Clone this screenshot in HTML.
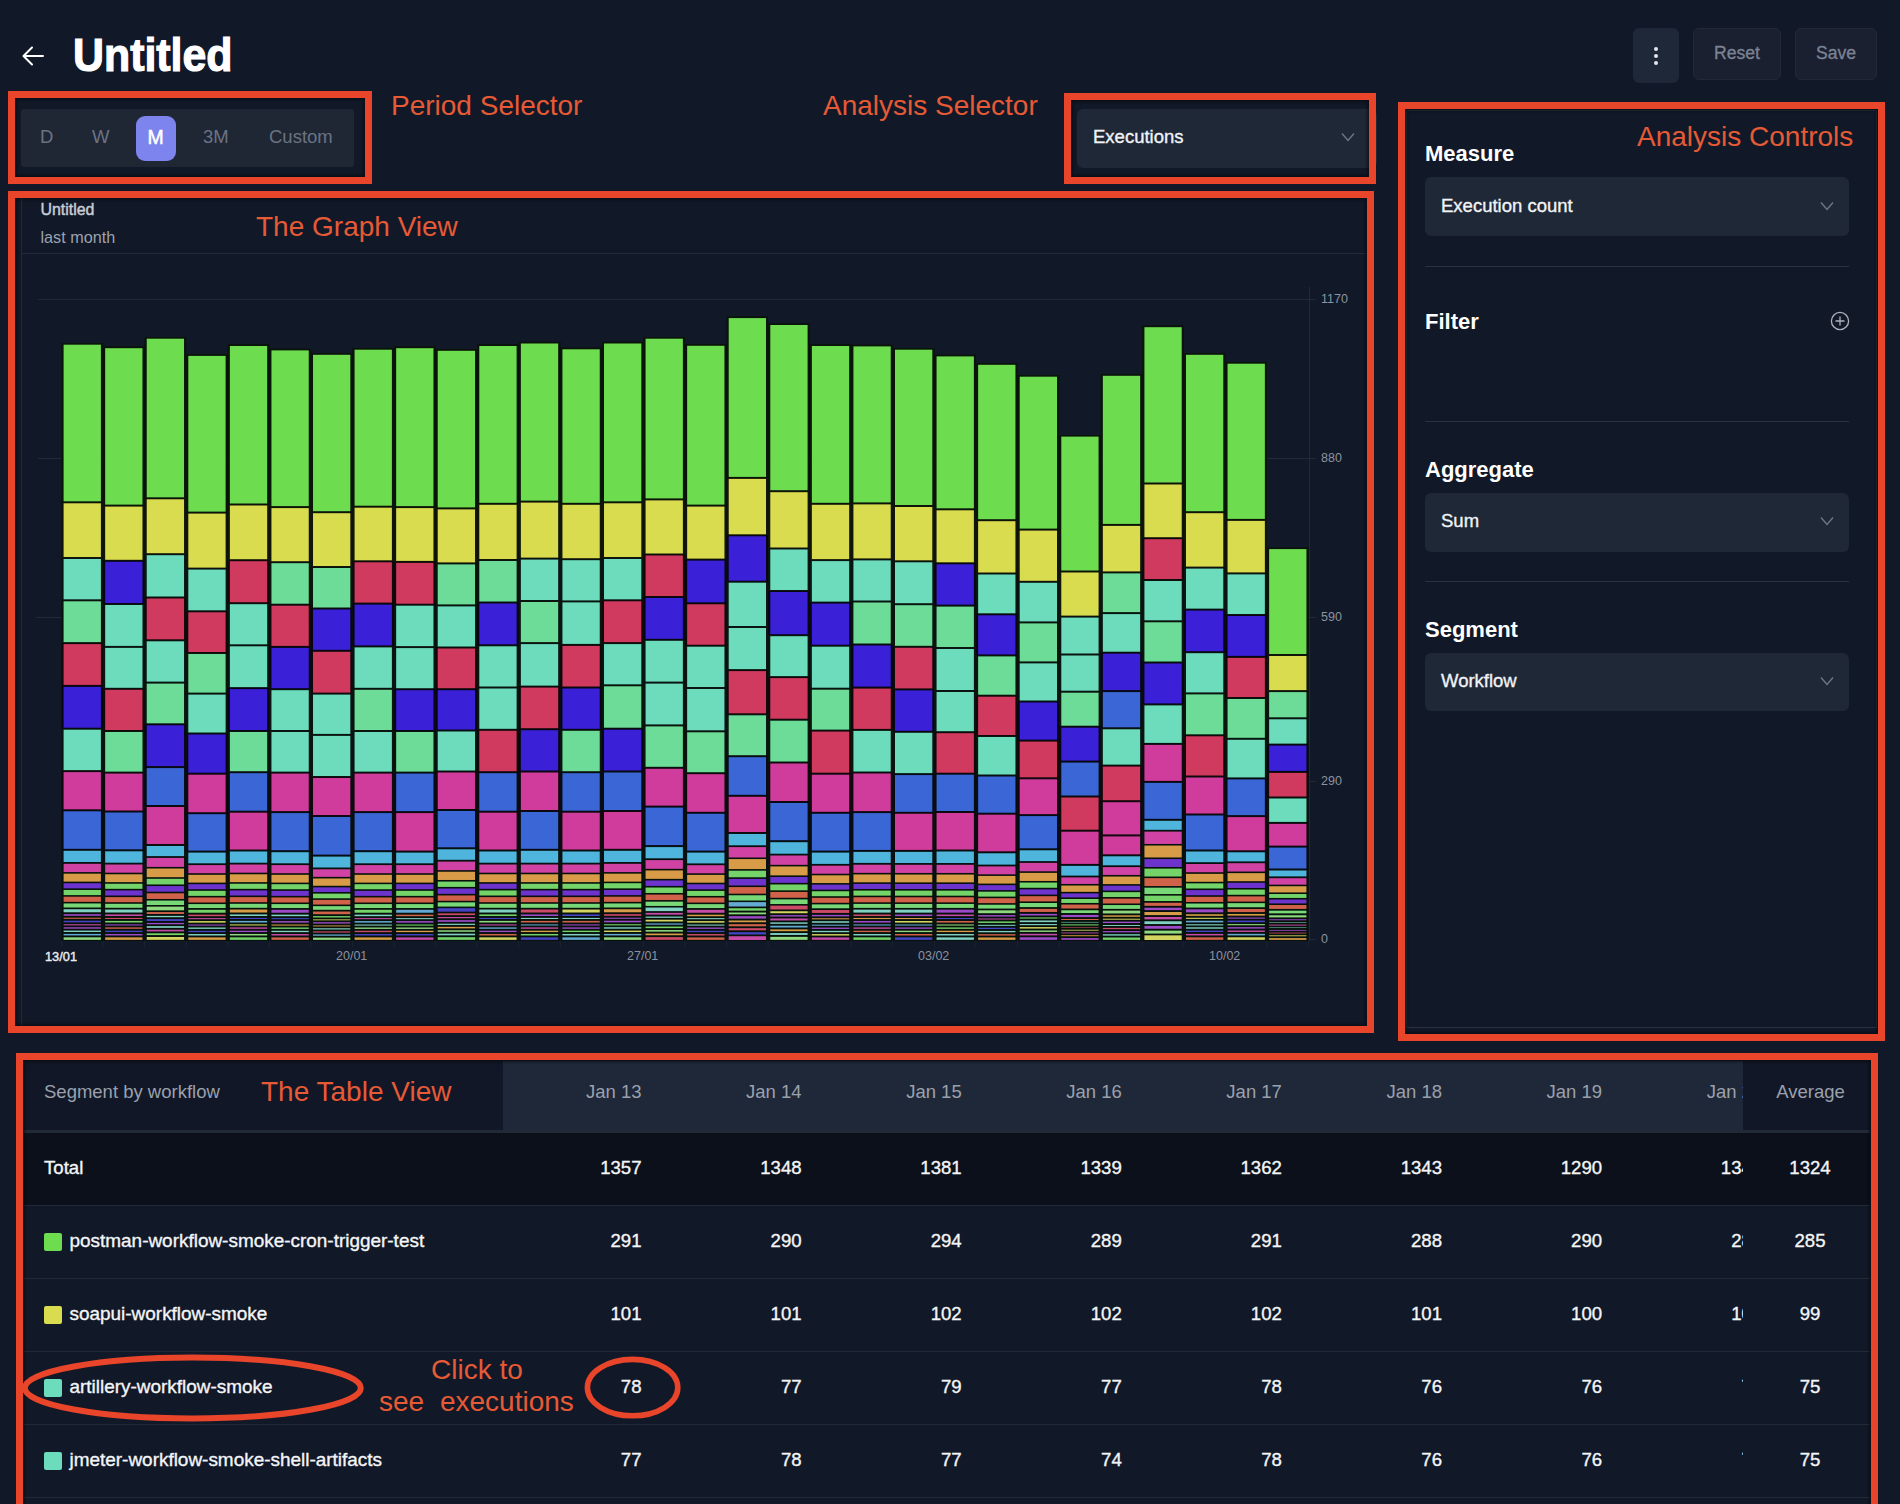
<!DOCTYPE html>
<html><head><meta charset="utf-8">
<style>
*{margin:0;padding:0;box-sizing:border-box}
html,body{width:1900px;height:1504px;overflow:hidden;background:#111827;font-family:"Liberation Sans",sans-serif;}
.a{position:absolute}
.box{position:absolute;border:7.5px solid #e8452a;box-shadow:inset 0 0 3px 2px rgba(5,7,12,0.55)}
.ann{position:absolute;color:#e65a36;font-size:28px;line-height:1;white-space:nowrap}
.dd{position:absolute;background:#1f2837;border-radius:6px}
.ddt{position:absolute;color:#f1f3f6;-webkit-text-stroke:0.35px #f1f3f6;font-size:18.5px;line-height:1;white-space:nowrap}
.chev{position:absolute;width:14px;height:10px}
.lbl{position:absolute;color:#fff;font-weight:bold;font-size:22px;line-height:1;white-space:nowrap}
.sep{position:absolute;height:1px;background:#2a3140}
.th{position:absolute;color:#9aa1ad;font-size:18.5px;line-height:1;white-space:nowrap;text-align:right}
.td{position:absolute;color:#f4f5f7;-webkit-text-stroke:0.35px #f4f5f7;font-size:18.6px;line-height:1;white-space:nowrap;text-align:right}
.sq{position:absolute;width:18px;height:18px;border-radius:2px}
</style></head><body>
<!-- header -->
<svg class="a" style="left:20px;top:44px" width="26" height="24" viewBox="0 0 26 24"><path d="M23 12H4M12 3.5L3.5 12L12 20.5" fill="none" stroke="#fff" stroke-width="2" stroke-linecap="round" stroke-linejoin="round"/></svg>
<div class="a" style="left:73px;top:30.5px;color:#fff;font-weight:bold;font-size:47px;line-height:1;white-space:nowrap;transform-origin:0 0;transform:scaleX(0.912);-webkit-text-stroke:1.2px #fff">Untitled</div>
<div class="a" style="left:1633px;top:28px;width:46px;height:55px;background:#1f2838;border-radius:6px"></div>
<div class="a" style="left:1653.6px;top:46.8px;width:4.4px;height:4.4px;border-radius:50%;background:#e3e6ec"></div>
<div class="a" style="left:1653.6px;top:53.6px;width:4.4px;height:4.4px;border-radius:50%;background:#e3e6ec"></div>
<div class="a" style="left:1653.6px;top:60.8px;width:4.4px;height:4.4px;border-radius:50%;background:#e3e6ec"></div>
<div class="a" style="left:1693px;top:28px;width:88px;height:52px;background:#1a2030;border:1px solid #212838;border-radius:6px"></div>
<div class="a" style="left:1714px;top:45px;color:#7b8394;-webkit-text-stroke:0.3px #7b8394;font-size:17.6px;line-height:1">Reset</div>
<div class="a" style="left:1795px;top:28px;width:82px;height:52px;background:#1a2030;border:1px solid #212838;border-radius:6px"></div>
<div class="a" style="left:1816px;top:45px;color:#7b8394;-webkit-text-stroke:0.3px #7b8394;font-size:17.6px;line-height:1">Save</div>

<!-- period selector -->
<div class="a" style="left:21px;top:109px;width:333px;height:58px;background:#1f2735;border-radius:3px"></div>
<div class="a" style="left:136px;top:116px;width:40px;height:45px;background:#7d84ee;border-radius:9px"></div>
<div class="a" style="left:40px;top:128px;color:#6b7383;font-size:18.5px;line-height:1">D</div>
<div class="a" style="left:92px;top:128px;color:#6b7383;font-size:18.5px;line-height:1">W</div>
<div class="a" style="left:147.5px;top:127.5px;color:#fff;-webkit-text-stroke:0.5px #fff;font-size:19.4px;line-height:1">M</div>
<div class="a" style="left:203px;top:128px;color:#6b7383;font-size:18.5px;line-height:1">3M</div>
<div class="a" style="left:269px;top:128px;color:#6b7383;font-size:18.5px;line-height:1">Custom</div>

<!-- analysis selector -->
<div class="dd" style="left:1077px;top:109px;width:300px;height:59px"></div>
<div class="ddt" style="left:1093px;top:128px">Executions</div>
<svg class="chev" style="left:1341px;top:132px" viewBox="0 0 14 10"><path d="M1 1.5L7 8.5L13 1.5" fill="none" stroke="#6e7687" stroke-width="1.4"/></svg>

<!-- graph card -->
<div class="a" style="left:21px;top:196px;width:1349px;height:832px;border:1px solid #222938;background:#111827"></div>
<div class="a" style="left:40.5px;top:201.5px;color:#c8cdd6;-webkit-text-stroke:0.45px #c8cdd6;font-size:15.9px;line-height:1">Untitled</div>
<div class="a" style="left:40.5px;top:229px;color:#9ca3af;font-size:16.2px;line-height:1">last month</div>
<div class="a" style="left:22px;top:253px;width:1350px;height:1px;background:#222938"></div>
<svg class="a" style="left:0;top:0" width="1900" height="1504">
<g stroke="#232a37" stroke-width="1">
<line x1="38" y1="299.5" x2="1316" y2="299.5"/>
<line x1="38" y1="458.5" x2="1316" y2="458.5"/>
<line x1="36" y1="617.5" x2="1316" y2="617.5"/>
<line x1="62" y1="781.5" x2="1316" y2="781.5"/>
<line x1="1309" y1="939.5" x2="1316" y2="939.5"/>
<line x1="1309.5" y1="287" x2="1309.5" y2="941"/>
</g>
<rect x="61.60" y="343.10" width="41.30" height="597.70" fill="#07110b"/>
<rect x="61.60" y="343.10" width="41.30" height="159.20" fill="#0a1509"/>
<rect x="61.60" y="502.30" width="41.30" height="55.70" fill="#121509"/>
<rect x="61.60" y="558.00" width="41.30" height="42.30" fill="#0a1511"/>
<rect x="61.60" y="600.30" width="41.30" height="42.80" fill="#0a150e"/>
<rect x="61.60" y="643.10" width="41.30" height="42.80" fill="#11080a"/>
<rect x="61.60" y="685.90" width="41.30" height="42.80" fill="#070612"/>
<rect x="61.60" y="728.70" width="41.30" height="42.40" fill="#0a1511"/>
<rect x="61.60" y="771.10" width="41.30" height="39.20" fill="#11080e"/>
<rect x="61.60" y="810.30" width="41.30" height="39.50" fill="#070c12"/>
<rect x="61.60" y="849.80" width="41.30" height="13.20" fill="#081213"/>
<rect x="63.60" y="344.70" width="37.30" height="156.60" fill="#6ddc4f"/>
<rect x="63.60" y="503.30" width="37.30" height="53.70" fill="#d9dc4f"/>
<rect x="63.60" y="559.00" width="37.30" height="40.30" fill="#6cdcbd"/>
<rect x="63.60" y="601.30" width="37.30" height="40.80" fill="#6ddc98"/>
<rect x="63.60" y="644.10" width="37.30" height="40.80" fill="#d03a5e"/>
<rect x="63.60" y="686.90" width="37.30" height="40.80" fill="#3a20d6"/>
<rect x="63.60" y="729.70" width="37.30" height="40.40" fill="#6cdcbd"/>
<rect x="63.60" y="772.10" width="37.30" height="37.20" fill="#d03c9c"/>
<rect x="63.60" y="811.30" width="37.30" height="37.50" fill="#3b66d6"/>
<rect x="63.60" y="850.80" width="37.30" height="11.20" fill="#4fb5dd"/>
<rect x="63.60" y="863.80" width="37.30" height="8.26" fill="#d043a4"/>
<rect x="63.60" y="873.66" width="37.30" height="7.96" fill="#d89c48"/>
<rect x="63.60" y="883.22" width="37.30" height="5.14" fill="#6c34cc"/>
<rect x="63.60" y="889.97" width="37.30" height="5.14" fill="#74d46a"/>
<rect x="63.60" y="896.71" width="37.30" height="5.14" fill="#d0624a"/>
<rect x="63.60" y="903.45" width="37.30" height="4.04" fill="#78d878"/>
<rect x="63.60" y="909.24" width="37.30" height="3.03" fill="#80d0c4"/>
<rect x="63.60" y="914.17" width="37.30" height="1.62" fill="#9c4ac8"/>
<rect x="63.60" y="917.70" width="37.30" height="1.12" fill="#d0624a"/>
<rect x="63.60" y="920.71" width="37.30" height="1.62" fill="#4444c4"/>
<rect x="63.60" y="924.24" width="37.30" height="1.12" fill="#c64aa8"/>
<rect x="63.60" y="927.26" width="37.30" height="1.42" fill="#9c4ac8"/>
<rect x="63.60" y="930.58" width="37.30" height="1.42" fill="#80d0c4"/>
<rect x="63.60" y="933.90" width="37.30" height="1.52" fill="#64a8d4"/>
<rect x="63.60" y="937.32" width="37.30" height="2.53" fill="#90d880"/>
<rect x="103.17" y="346.60" width="41.30" height="594.20" fill="#07110b"/>
<rect x="103.17" y="346.60" width="41.30" height="159.00" fill="#0a1509"/>
<rect x="103.17" y="505.60" width="41.30" height="55.20" fill="#121509"/>
<rect x="103.17" y="560.80" width="41.30" height="43.20" fill="#070612"/>
<rect x="103.17" y="604.00" width="41.30" height="42.90" fill="#0a1511"/>
<rect x="103.17" y="646.90" width="41.30" height="41.90" fill="#0a1511"/>
<rect x="103.17" y="688.80" width="41.30" height="42.20" fill="#11080a"/>
<rect x="103.17" y="731.00" width="41.30" height="41.60" fill="#0a150e"/>
<rect x="103.17" y="772.60" width="41.30" height="38.90" fill="#11080e"/>
<rect x="103.17" y="811.50" width="41.30" height="38.80" fill="#070c12"/>
<rect x="103.17" y="850.30" width="41.30" height="13.40" fill="#081213"/>
<rect x="105.17" y="348.20" width="37.30" height="156.40" fill="#6ddc4f"/>
<rect x="105.17" y="506.60" width="37.30" height="53.20" fill="#d9dc4f"/>
<rect x="105.17" y="561.80" width="37.30" height="41.20" fill="#3a20d6"/>
<rect x="105.17" y="605.00" width="37.30" height="40.90" fill="#6cdcbd"/>
<rect x="105.17" y="647.90" width="37.30" height="39.90" fill="#6cdcbd"/>
<rect x="105.17" y="689.80" width="37.30" height="40.20" fill="#d03a5e"/>
<rect x="105.17" y="732.00" width="37.30" height="39.60" fill="#6ddc98"/>
<rect x="105.17" y="773.60" width="37.30" height="36.90" fill="#d03c9c"/>
<rect x="105.17" y="812.50" width="37.30" height="36.80" fill="#3b66d6"/>
<rect x="105.17" y="851.30" width="37.30" height="11.40" fill="#4fb5dd"/>
<rect x="105.17" y="864.50" width="37.30" height="8.17" fill="#d043a4"/>
<rect x="105.17" y="874.27" width="37.30" height="7.88" fill="#d89c48"/>
<rect x="105.17" y="883.75" width="37.30" height="5.08" fill="#74d46a"/>
<rect x="105.17" y="890.43" width="37.30" height="5.08" fill="#6c34cc"/>
<rect x="105.17" y="897.12" width="37.30" height="5.08" fill="#d0624a"/>
<rect x="105.17" y="903.80" width="37.30" height="3.99" fill="#78d878"/>
<rect x="105.17" y="909.53" width="37.30" height="2.99" fill="#80d0c4"/>
<rect x="105.17" y="914.42" width="37.30" height="1.59" fill="#c64aa8"/>
<rect x="105.17" y="917.91" width="37.30" height="1.09" fill="#cc4a68"/>
<rect x="105.17" y="920.90" width="37.30" height="1.59" fill="#74d46a"/>
<rect x="105.17" y="924.40" width="37.30" height="1.09" fill="#9c4ac8"/>
<rect x="105.17" y="927.39" width="37.30" height="1.39" fill="#d0624a"/>
<rect x="105.17" y="930.68" width="37.30" height="1.39" fill="#4444c4"/>
<rect x="105.17" y="933.97" width="37.30" height="1.49" fill="#9c4ac8"/>
<rect x="105.17" y="937.36" width="37.30" height="2.49" fill="#d89c48"/>
<rect x="144.74" y="337.10" width="41.30" height="603.70" fill="#07110b"/>
<rect x="144.74" y="337.10" width="41.30" height="161.20" fill="#0a1509"/>
<rect x="144.74" y="498.30" width="41.30" height="55.90" fill="#121509"/>
<rect x="144.74" y="554.20" width="41.30" height="43.30" fill="#0a1511"/>
<rect x="144.74" y="597.50" width="41.30" height="42.80" fill="#11080a"/>
<rect x="144.74" y="640.30" width="41.30" height="42.30" fill="#0a1511"/>
<rect x="144.74" y="682.60" width="41.30" height="41.70" fill="#0a150e"/>
<rect x="144.74" y="724.30" width="41.30" height="42.80" fill="#070612"/>
<rect x="144.74" y="767.10" width="41.30" height="38.90" fill="#070c12"/>
<rect x="144.74" y="806.00" width="41.30" height="39.00" fill="#11080e"/>
<rect x="144.74" y="845.00" width="41.30" height="12.10" fill="#081213"/>
<rect x="146.74" y="338.70" width="37.30" height="158.60" fill="#6ddc4f"/>
<rect x="146.74" y="499.30" width="37.30" height="53.90" fill="#d9dc4f"/>
<rect x="146.74" y="555.20" width="37.30" height="41.30" fill="#6cdcbd"/>
<rect x="146.74" y="598.50" width="37.30" height="40.80" fill="#d03a5e"/>
<rect x="146.74" y="641.30" width="37.30" height="40.30" fill="#6cdcbd"/>
<rect x="146.74" y="683.60" width="37.30" height="39.70" fill="#6ddc98"/>
<rect x="146.74" y="725.30" width="37.30" height="40.80" fill="#3a20d6"/>
<rect x="146.74" y="768.10" width="37.30" height="36.90" fill="#3b66d6"/>
<rect x="146.74" y="807.00" width="37.30" height="37.00" fill="#d03c9c"/>
<rect x="146.74" y="846.00" width="37.30" height="10.10" fill="#4fb5dd"/>
<rect x="146.74" y="857.90" width="37.30" height="9.01" fill="#d043a4"/>
<rect x="146.74" y="868.51" width="37.30" height="8.69" fill="#d89c48"/>
<rect x="146.74" y="878.80" width="37.30" height="5.65" fill="#74d46a"/>
<rect x="146.74" y="886.05" width="37.30" height="5.65" fill="#6c34cc"/>
<rect x="146.74" y="893.31" width="37.30" height="5.65" fill="#d0624a"/>
<rect x="146.74" y="900.56" width="37.30" height="4.46" fill="#78d878"/>
<rect x="146.74" y="906.63" width="37.30" height="3.71" fill="#90d880"/>
<rect x="146.74" y="912.08" width="37.30" height="1.89" fill="#d0624a"/>
<rect x="146.74" y="915.87" width="37.30" height="1.35" fill="#80d0c4"/>
<rect x="146.74" y="919.12" width="37.30" height="1.89" fill="#4444c4"/>
<rect x="146.74" y="922.91" width="37.30" height="1.35" fill="#9c4ac8"/>
<rect x="146.74" y="926.16" width="37.30" height="1.67" fill="#80d0c4"/>
<rect x="146.74" y="929.73" width="37.30" height="1.67" fill="#c64aa8"/>
<rect x="146.74" y="933.30" width="37.30" height="1.78" fill="#74d46a"/>
<rect x="146.74" y="936.99" width="37.30" height="2.86" fill="#d4d460"/>
<rect x="186.31" y="354.30" width="41.30" height="586.50" fill="#07110b"/>
<rect x="186.31" y="354.30" width="41.30" height="158.30" fill="#0a1509"/>
<rect x="186.31" y="512.60" width="41.30" height="56.00" fill="#121509"/>
<rect x="186.31" y="568.60" width="41.30" height="42.70" fill="#0a1511"/>
<rect x="186.31" y="611.30" width="41.30" height="41.70" fill="#11080a"/>
<rect x="186.31" y="653.00" width="41.30" height="40.60" fill="#0a150e"/>
<rect x="186.31" y="693.60" width="41.30" height="39.90" fill="#0a1511"/>
<rect x="186.31" y="733.50" width="41.30" height="40.20" fill="#070612"/>
<rect x="186.31" y="773.70" width="41.30" height="39.50" fill="#11080e"/>
<rect x="186.31" y="813.20" width="41.30" height="38.40" fill="#070c12"/>
<rect x="186.31" y="851.60" width="41.30" height="12.70" fill="#081213"/>
<rect x="188.31" y="355.90" width="37.30" height="155.70" fill="#6ddc4f"/>
<rect x="188.31" y="513.60" width="37.30" height="54.00" fill="#d9dc4f"/>
<rect x="188.31" y="569.60" width="37.30" height="40.70" fill="#6cdcbd"/>
<rect x="188.31" y="612.30" width="37.30" height="39.70" fill="#d03a5e"/>
<rect x="188.31" y="654.00" width="37.30" height="38.60" fill="#6ddc98"/>
<rect x="188.31" y="694.60" width="37.30" height="37.90" fill="#6cdcbd"/>
<rect x="188.31" y="734.50" width="37.30" height="38.20" fill="#3a20d6"/>
<rect x="188.31" y="774.70" width="37.30" height="37.50" fill="#d03c9c"/>
<rect x="188.31" y="814.20" width="37.30" height="36.40" fill="#3b66d6"/>
<rect x="188.31" y="852.60" width="37.30" height="10.70" fill="#4fb5dd"/>
<rect x="188.31" y="865.10" width="37.30" height="8.10" fill="#d043a4"/>
<rect x="188.31" y="874.80" width="37.30" height="7.80" fill="#d89c48"/>
<rect x="188.31" y="884.20" width="37.30" height="5.03" fill="#6c34cc"/>
<rect x="188.31" y="890.83" width="37.30" height="5.03" fill="#74d46a"/>
<rect x="188.31" y="897.46" width="37.30" height="5.03" fill="#d0624a"/>
<rect x="188.31" y="904.09" width="37.30" height="3.94" fill="#78d878"/>
<rect x="188.31" y="909.78" width="37.30" height="2.95" fill="#74d46a"/>
<rect x="188.31" y="914.63" width="37.30" height="1.56" fill="#cc4a68"/>
<rect x="188.31" y="918.10" width="37.30" height="1.07" fill="#c64aa8"/>
<rect x="188.31" y="921.07" width="37.30" height="1.56" fill="#d4d460"/>
<rect x="188.31" y="924.53" width="37.30" height="1.07" fill="#9c4ac8"/>
<rect x="188.31" y="927.50" width="37.30" height="1.37" fill="#80d0c4"/>
<rect x="188.31" y="930.76" width="37.30" height="1.37" fill="#4444c4"/>
<rect x="188.31" y="934.03" width="37.30" height="1.46" fill="#80d0c4"/>
<rect x="188.31" y="937.40" width="37.30" height="2.45" fill="#d89c48"/>
<rect x="227.88" y="344.40" width="41.30" height="596.40" fill="#07110b"/>
<rect x="227.88" y="344.40" width="41.30" height="160.10" fill="#0a1509"/>
<rect x="227.88" y="504.50" width="41.30" height="55.70" fill="#121509"/>
<rect x="227.88" y="560.20" width="41.30" height="43.00" fill="#11080a"/>
<rect x="227.88" y="603.20" width="41.30" height="42.10" fill="#0a1511"/>
<rect x="227.88" y="645.30" width="41.30" height="42.80" fill="#0a1511"/>
<rect x="227.88" y="688.10" width="41.30" height="42.90" fill="#070612"/>
<rect x="227.88" y="731.00" width="41.30" height="41.20" fill="#0a150e"/>
<rect x="227.88" y="772.20" width="41.30" height="39.50" fill="#070c12"/>
<rect x="227.88" y="811.70" width="41.30" height="38.80" fill="#11080e"/>
<rect x="227.88" y="850.50" width="41.30" height="13.20" fill="#081213"/>
<rect x="229.88" y="346.00" width="37.30" height="157.50" fill="#6ddc4f"/>
<rect x="229.88" y="505.50" width="37.30" height="53.70" fill="#d9dc4f"/>
<rect x="229.88" y="561.20" width="37.30" height="41.00" fill="#d03a5e"/>
<rect x="229.88" y="604.20" width="37.30" height="40.10" fill="#6cdcbd"/>
<rect x="229.88" y="646.30" width="37.30" height="40.80" fill="#6cdcbd"/>
<rect x="229.88" y="689.10" width="37.30" height="40.90" fill="#3a20d6"/>
<rect x="229.88" y="732.00" width="37.30" height="39.20" fill="#6ddc98"/>
<rect x="229.88" y="773.20" width="37.30" height="37.50" fill="#3b66d6"/>
<rect x="229.88" y="812.70" width="37.30" height="36.80" fill="#d03c9c"/>
<rect x="229.88" y="851.50" width="37.30" height="11.20" fill="#4fb5dd"/>
<rect x="229.88" y="864.50" width="37.30" height="8.17" fill="#d043a4"/>
<rect x="229.88" y="874.27" width="37.30" height="7.88" fill="#d89c48"/>
<rect x="229.88" y="883.75" width="37.30" height="5.08" fill="#74d46a"/>
<rect x="229.88" y="890.43" width="37.30" height="5.08" fill="#6c34cc"/>
<rect x="229.88" y="897.12" width="37.30" height="5.08" fill="#d0624a"/>
<rect x="229.88" y="903.80" width="37.30" height="3.99" fill="#78d878"/>
<rect x="229.88" y="909.53" width="37.30" height="2.99" fill="#d89c48"/>
<rect x="229.88" y="914.42" width="37.30" height="1.59" fill="#80d0c4"/>
<rect x="229.88" y="917.91" width="37.30" height="1.09" fill="#4444c4"/>
<rect x="229.88" y="920.90" width="37.30" height="1.59" fill="#64a8d4"/>
<rect x="229.88" y="924.40" width="37.30" height="1.09" fill="#d4d460"/>
<rect x="229.88" y="927.39" width="37.30" height="1.39" fill="#c64aa8"/>
<rect x="229.88" y="930.68" width="37.30" height="1.39" fill="#9c4ac8"/>
<rect x="229.88" y="933.97" width="37.30" height="1.49" fill="#90d880"/>
<rect x="229.88" y="937.36" width="37.30" height="2.49" fill="#74d46a"/>
<rect x="269.45" y="348.80" width="41.30" height="592.00" fill="#07110b"/>
<rect x="269.45" y="348.80" width="41.30" height="158.30" fill="#0a1509"/>
<rect x="269.45" y="507.10" width="41.30" height="55.10" fill="#121509"/>
<rect x="269.45" y="562.20" width="41.30" height="42.50" fill="#0a150e"/>
<rect x="269.45" y="604.70" width="41.30" height="42.20" fill="#11080a"/>
<rect x="269.45" y="646.90" width="41.30" height="42.30" fill="#070612"/>
<rect x="269.45" y="689.20" width="41.30" height="41.80" fill="#0a1511"/>
<rect x="269.45" y="731.00" width="41.30" height="41.60" fill="#0a1511"/>
<rect x="269.45" y="772.60" width="41.30" height="39.50" fill="#11080e"/>
<rect x="269.45" y="812.10" width="41.30" height="39.10" fill="#070c12"/>
<rect x="269.45" y="851.20" width="41.30" height="13.10" fill="#081213"/>
<rect x="271.45" y="350.40" width="37.30" height="155.70" fill="#6ddc4f"/>
<rect x="271.45" y="508.10" width="37.30" height="53.10" fill="#d9dc4f"/>
<rect x="271.45" y="563.20" width="37.30" height="40.50" fill="#6ddc98"/>
<rect x="271.45" y="605.70" width="37.30" height="40.20" fill="#d03a5e"/>
<rect x="271.45" y="647.90" width="37.30" height="40.30" fill="#3a20d6"/>
<rect x="271.45" y="690.20" width="37.30" height="39.80" fill="#6cdcbd"/>
<rect x="271.45" y="732.00" width="37.30" height="39.60" fill="#6cdcbd"/>
<rect x="271.45" y="773.60" width="37.30" height="37.50" fill="#d03c9c"/>
<rect x="271.45" y="813.10" width="37.30" height="37.10" fill="#3b66d6"/>
<rect x="271.45" y="852.20" width="37.30" height="11.10" fill="#4fb5dd"/>
<rect x="271.45" y="865.10" width="37.30" height="8.10" fill="#d043a4"/>
<rect x="271.45" y="874.80" width="37.30" height="7.80" fill="#d89c48"/>
<rect x="271.45" y="884.20" width="37.30" height="5.03" fill="#74d46a"/>
<rect x="271.45" y="890.83" width="37.30" height="5.03" fill="#6c34cc"/>
<rect x="271.45" y="897.46" width="37.30" height="5.03" fill="#d0624a"/>
<rect x="271.45" y="904.09" width="37.30" height="3.94" fill="#78d878"/>
<rect x="271.45" y="909.78" width="37.30" height="2.95" fill="#9c4ac8"/>
<rect x="271.45" y="914.63" width="37.30" height="1.56" fill="#80d0c4"/>
<rect x="271.45" y="918.10" width="37.30" height="1.07" fill="#4444c4"/>
<rect x="271.45" y="921.07" width="37.30" height="1.56" fill="#9c4ac8"/>
<rect x="271.45" y="924.53" width="37.30" height="1.07" fill="#d89c48"/>
<rect x="271.45" y="927.50" width="37.30" height="1.37" fill="#74d46a"/>
<rect x="271.45" y="930.76" width="37.30" height="1.37" fill="#80d0c4"/>
<rect x="271.45" y="934.03" width="37.30" height="1.46" fill="#c64aa8"/>
<rect x="271.45" y="937.40" width="37.30" height="2.45" fill="#d0624a"/>
<rect x="311.02" y="353.20" width="41.30" height="587.60" fill="#07110b"/>
<rect x="311.02" y="353.20" width="41.30" height="159.00" fill="#0a1509"/>
<rect x="311.02" y="512.20" width="41.30" height="54.80" fill="#121509"/>
<rect x="311.02" y="567.00" width="41.30" height="41.50" fill="#0a150e"/>
<rect x="311.02" y="608.50" width="41.30" height="42.30" fill="#070612"/>
<rect x="311.02" y="650.80" width="41.30" height="42.80" fill="#11080a"/>
<rect x="311.02" y="693.60" width="41.30" height="41.30" fill="#0a1511"/>
<rect x="311.02" y="734.90" width="41.30" height="42.10" fill="#0a1511"/>
<rect x="311.02" y="777.00" width="41.30" height="39.00" fill="#11080e"/>
<rect x="311.02" y="816.00" width="41.30" height="39.60" fill="#070c12"/>
<rect x="311.02" y="855.60" width="41.30" height="12.90" fill="#081213"/>
<rect x="313.02" y="354.80" width="37.30" height="156.40" fill="#6ddc4f"/>
<rect x="313.02" y="513.20" width="37.30" height="52.80" fill="#d9dc4f"/>
<rect x="313.02" y="568.00" width="37.30" height="39.50" fill="#6ddc98"/>
<rect x="313.02" y="609.50" width="37.30" height="40.30" fill="#3a20d6"/>
<rect x="313.02" y="651.80" width="37.30" height="40.80" fill="#d03a5e"/>
<rect x="313.02" y="694.60" width="37.30" height="39.30" fill="#6cdcbd"/>
<rect x="313.02" y="735.90" width="37.30" height="40.10" fill="#6cdcbd"/>
<rect x="313.02" y="778.00" width="37.30" height="37.00" fill="#d03c9c"/>
<rect x="313.02" y="817.00" width="37.30" height="37.60" fill="#3b66d6"/>
<rect x="313.02" y="856.60" width="37.30" height="10.90" fill="#4fb5dd"/>
<rect x="313.02" y="869.30" width="37.30" height="7.57" fill="#d043a4"/>
<rect x="313.02" y="878.47" width="37.30" height="7.29" fill="#d89c48"/>
<rect x="313.02" y="887.35" width="37.30" height="4.67" fill="#6c34cc"/>
<rect x="313.02" y="893.62" width="37.30" height="4.67" fill="#74d46a"/>
<rect x="313.02" y="899.88" width="37.30" height="4.67" fill="#d0624a"/>
<rect x="313.02" y="906.15" width="37.30" height="3.64" fill="#78d878"/>
<rect x="313.02" y="911.54" width="37.30" height="2.68" fill="#d0624a"/>
<rect x="313.02" y="916.12" width="37.30" height="1.37" fill="#74d46a"/>
<rect x="313.02" y="919.40" width="37.30" height="0.91" fill="#d4d460"/>
<rect x="313.02" y="922.20" width="37.30" height="1.37" fill="#9c4ac8"/>
<rect x="313.02" y="925.48" width="37.30" height="0.91" fill="#d89c48"/>
<rect x="313.02" y="928.28" width="37.30" height="1.19" fill="#80d0c4"/>
<rect x="313.02" y="931.37" width="37.30" height="1.19" fill="#cc4a68"/>
<rect x="313.02" y="934.45" width="37.30" height="1.28" fill="#64a8d4"/>
<rect x="313.02" y="937.63" width="37.30" height="2.22" fill="#90d880"/>
<rect x="352.59" y="348.10" width="41.30" height="592.70" fill="#07110b"/>
<rect x="352.59" y="348.10" width="41.30" height="158.60" fill="#0a1509"/>
<rect x="352.59" y="506.70" width="41.30" height="54.60" fill="#121509"/>
<rect x="352.59" y="561.30" width="41.30" height="42.30" fill="#11080a"/>
<rect x="352.59" y="603.60" width="41.30" height="42.80" fill="#070612"/>
<rect x="352.59" y="646.40" width="41.30" height="42.40" fill="#0a1511"/>
<rect x="352.59" y="688.80" width="41.30" height="42.20" fill="#0a150e"/>
<rect x="352.59" y="731.00" width="41.30" height="41.60" fill="#0a1511"/>
<rect x="352.59" y="772.60" width="41.30" height="39.50" fill="#11080e"/>
<rect x="352.59" y="812.10" width="41.30" height="39.10" fill="#070c12"/>
<rect x="352.59" y="851.20" width="41.30" height="13.10" fill="#081213"/>
<rect x="354.59" y="349.70" width="37.30" height="156.00" fill="#6ddc4f"/>
<rect x="354.59" y="507.70" width="37.30" height="52.60" fill="#d9dc4f"/>
<rect x="354.59" y="562.30" width="37.30" height="40.30" fill="#d03a5e"/>
<rect x="354.59" y="604.60" width="37.30" height="40.80" fill="#3a20d6"/>
<rect x="354.59" y="647.40" width="37.30" height="40.40" fill="#6cdcbd"/>
<rect x="354.59" y="689.80" width="37.30" height="40.20" fill="#6ddc98"/>
<rect x="354.59" y="732.00" width="37.30" height="39.60" fill="#6cdcbd"/>
<rect x="354.59" y="773.60" width="37.30" height="37.50" fill="#d03c9c"/>
<rect x="354.59" y="813.10" width="37.30" height="37.10" fill="#3b66d6"/>
<rect x="354.59" y="852.20" width="37.30" height="11.10" fill="#4fb5dd"/>
<rect x="354.59" y="865.10" width="37.30" height="8.10" fill="#d043a4"/>
<rect x="354.59" y="874.80" width="37.30" height="7.80" fill="#d89c48"/>
<rect x="354.59" y="884.20" width="37.30" height="5.03" fill="#74d46a"/>
<rect x="354.59" y="890.83" width="37.30" height="5.03" fill="#6c34cc"/>
<rect x="354.59" y="897.46" width="37.30" height="5.03" fill="#d0624a"/>
<rect x="354.59" y="904.09" width="37.30" height="3.94" fill="#78d878"/>
<rect x="354.59" y="909.78" width="37.30" height="2.95" fill="#74d46a"/>
<rect x="354.59" y="914.63" width="37.30" height="1.56" fill="#80d0c4"/>
<rect x="354.59" y="918.10" width="37.30" height="1.07" fill="#c64aa8"/>
<rect x="354.59" y="921.07" width="37.30" height="1.56" fill="#64a8d4"/>
<rect x="354.59" y="924.53" width="37.30" height="1.07" fill="#80d0c4"/>
<rect x="354.59" y="927.50" width="37.30" height="1.37" fill="#90d880"/>
<rect x="354.59" y="930.76" width="37.30" height="1.37" fill="#cc4a68"/>
<rect x="354.59" y="934.03" width="37.30" height="1.46" fill="#4444c4"/>
<rect x="354.59" y="937.40" width="37.30" height="2.45" fill="#d89c48"/>
<rect x="394.16" y="346.60" width="41.30" height="594.20" fill="#07110b"/>
<rect x="394.16" y="346.60" width="41.30" height="160.50" fill="#0a1509"/>
<rect x="394.16" y="507.10" width="41.30" height="54.80" fill="#121509"/>
<rect x="394.16" y="561.90" width="41.30" height="42.80" fill="#11080a"/>
<rect x="394.16" y="604.70" width="41.30" height="42.40" fill="#0a1511"/>
<rect x="394.16" y="647.10" width="41.30" height="42.10" fill="#0a1511"/>
<rect x="394.16" y="689.20" width="41.30" height="41.80" fill="#070612"/>
<rect x="394.16" y="731.00" width="41.30" height="41.60" fill="#0a150e"/>
<rect x="394.16" y="772.60" width="41.30" height="39.50" fill="#070c12"/>
<rect x="394.16" y="812.10" width="41.30" height="39.50" fill="#11080e"/>
<rect x="394.16" y="851.60" width="41.30" height="12.70" fill="#081213"/>
<rect x="396.16" y="348.20" width="37.30" height="157.90" fill="#6ddc4f"/>
<rect x="396.16" y="508.10" width="37.30" height="52.80" fill="#d9dc4f"/>
<rect x="396.16" y="562.90" width="37.30" height="40.80" fill="#d03a5e"/>
<rect x="396.16" y="605.70" width="37.30" height="40.40" fill="#6cdcbd"/>
<rect x="396.16" y="648.10" width="37.30" height="40.10" fill="#6cdcbd"/>
<rect x="396.16" y="690.20" width="37.30" height="39.80" fill="#3a20d6"/>
<rect x="396.16" y="732.00" width="37.30" height="39.60" fill="#6ddc98"/>
<rect x="396.16" y="773.60" width="37.30" height="37.50" fill="#3b66d6"/>
<rect x="396.16" y="813.10" width="37.30" height="37.50" fill="#d03c9c"/>
<rect x="396.16" y="852.60" width="37.30" height="10.70" fill="#4fb5dd"/>
<rect x="396.16" y="865.10" width="37.30" height="8.10" fill="#d043a4"/>
<rect x="396.16" y="874.80" width="37.30" height="7.80" fill="#d89c48"/>
<rect x="396.16" y="884.20" width="37.30" height="5.03" fill="#6c34cc"/>
<rect x="396.16" y="890.83" width="37.30" height="5.03" fill="#74d46a"/>
<rect x="396.16" y="897.46" width="37.30" height="5.03" fill="#d0624a"/>
<rect x="396.16" y="904.09" width="37.30" height="3.94" fill="#78d878"/>
<rect x="396.16" y="909.78" width="37.30" height="2.95" fill="#64a8d4"/>
<rect x="396.16" y="914.63" width="37.30" height="1.56" fill="#d0624a"/>
<rect x="396.16" y="918.10" width="37.30" height="1.07" fill="#80d0c4"/>
<rect x="396.16" y="921.07" width="37.30" height="1.56" fill="#9c4ac8"/>
<rect x="396.16" y="924.53" width="37.30" height="1.07" fill="#74d46a"/>
<rect x="396.16" y="927.50" width="37.30" height="1.37" fill="#90d880"/>
<rect x="396.16" y="930.76" width="37.30" height="1.37" fill="#d89c48"/>
<rect x="396.16" y="934.03" width="37.30" height="1.46" fill="#4444c4"/>
<rect x="396.16" y="937.40" width="37.30" height="2.45" fill="#c64aa8"/>
<rect x="435.73" y="349.20" width="41.30" height="591.60" fill="#07110b"/>
<rect x="435.73" y="349.20" width="41.30" height="159.20" fill="#0a1509"/>
<rect x="435.73" y="508.40" width="41.30" height="55.00" fill="#121509"/>
<rect x="435.73" y="563.40" width="41.30" height="42.00" fill="#0a150e"/>
<rect x="435.73" y="605.40" width="41.30" height="42.10" fill="#0a1511"/>
<rect x="435.73" y="647.50" width="41.30" height="41.70" fill="#11080a"/>
<rect x="435.73" y="689.20" width="41.30" height="41.30" fill="#070612"/>
<rect x="435.73" y="730.50" width="41.30" height="41.00" fill="#0a1511"/>
<rect x="435.73" y="771.50" width="41.30" height="38.50" fill="#11080e"/>
<rect x="435.73" y="810.00" width="41.30" height="38.30" fill="#070c12"/>
<rect x="435.73" y="848.30" width="41.30" height="12.50" fill="#081213"/>
<rect x="437.73" y="350.80" width="37.30" height="156.60" fill="#6ddc4f"/>
<rect x="437.73" y="509.40" width="37.30" height="53.00" fill="#d9dc4f"/>
<rect x="437.73" y="564.40" width="37.30" height="40.00" fill="#6ddc98"/>
<rect x="437.73" y="606.40" width="37.30" height="40.10" fill="#6cdcbd"/>
<rect x="437.73" y="648.50" width="37.30" height="39.70" fill="#d03a5e"/>
<rect x="437.73" y="690.20" width="37.30" height="39.30" fill="#3a20d6"/>
<rect x="437.73" y="731.50" width="37.30" height="39.00" fill="#6cdcbd"/>
<rect x="437.73" y="772.50" width="37.30" height="36.50" fill="#d03c9c"/>
<rect x="437.73" y="811.00" width="37.30" height="36.30" fill="#3b66d6"/>
<rect x="437.73" y="849.30" width="37.30" height="10.50" fill="#4fb5dd"/>
<rect x="437.73" y="861.60" width="37.30" height="8.54" fill="#d043a4"/>
<rect x="437.73" y="871.74" width="37.30" height="8.23" fill="#d89c48"/>
<rect x="437.73" y="881.57" width="37.30" height="5.33" fill="#74d46a"/>
<rect x="437.73" y="888.51" width="37.30" height="5.33" fill="#6c34cc"/>
<rect x="437.73" y="895.44" width="37.30" height="5.33" fill="#d0624a"/>
<rect x="437.73" y="902.38" width="37.30" height="4.20" fill="#78d878"/>
<rect x="437.73" y="908.17" width="37.30" height="3.47" fill="#4444c4"/>
<rect x="437.73" y="913.39" width="37.30" height="1.72" fill="#cc4a68"/>
<rect x="437.73" y="917.02" width="37.30" height="1.20" fill="#c64aa8"/>
<rect x="437.73" y="920.12" width="37.30" height="1.72" fill="#9c4ac8"/>
<rect x="437.73" y="923.74" width="37.30" height="1.20" fill="#80d0c4"/>
<rect x="437.73" y="926.85" width="37.30" height="1.52" fill="#d89c48"/>
<rect x="437.73" y="930.26" width="37.30" height="1.52" fill="#90d880"/>
<rect x="437.73" y="933.68" width="37.30" height="1.62" fill="#80d0c4"/>
<rect x="437.73" y="937.20" width="37.30" height="2.65" fill="#74d46a"/>
<rect x="477.30" y="344.40" width="41.30" height="596.40" fill="#07110b"/>
<rect x="477.30" y="344.40" width="41.30" height="159.40" fill="#0a1509"/>
<rect x="477.30" y="503.80" width="41.30" height="56.20" fill="#121509"/>
<rect x="477.30" y="560.00" width="41.30" height="42.50" fill="#0a150e"/>
<rect x="477.30" y="602.50" width="41.30" height="42.80" fill="#070612"/>
<rect x="477.30" y="645.30" width="41.30" height="42.20" fill="#0a1511"/>
<rect x="477.30" y="687.50" width="41.30" height="42.30" fill="#0a1511"/>
<rect x="477.30" y="729.80" width="41.30" height="42.40" fill="#11080a"/>
<rect x="477.30" y="772.20" width="41.30" height="39.50" fill="#070c12"/>
<rect x="477.30" y="811.70" width="41.30" height="38.80" fill="#11080e"/>
<rect x="477.30" y="850.50" width="41.30" height="13.20" fill="#081213"/>
<rect x="479.30" y="346.00" width="37.30" height="156.80" fill="#6ddc4f"/>
<rect x="479.30" y="504.80" width="37.30" height="54.20" fill="#d9dc4f"/>
<rect x="479.30" y="561.00" width="37.30" height="40.50" fill="#6ddc98"/>
<rect x="479.30" y="603.50" width="37.30" height="40.80" fill="#3a20d6"/>
<rect x="479.30" y="646.30" width="37.30" height="40.20" fill="#6cdcbd"/>
<rect x="479.30" y="688.50" width="37.30" height="40.30" fill="#6cdcbd"/>
<rect x="479.30" y="730.80" width="37.30" height="40.40" fill="#d03a5e"/>
<rect x="479.30" y="773.20" width="37.30" height="37.50" fill="#3b66d6"/>
<rect x="479.30" y="812.70" width="37.30" height="36.80" fill="#d03c9c"/>
<rect x="479.30" y="851.50" width="37.30" height="11.20" fill="#4fb5dd"/>
<rect x="479.30" y="864.50" width="37.30" height="8.17" fill="#d043a4"/>
<rect x="479.30" y="874.27" width="37.30" height="7.88" fill="#d89c48"/>
<rect x="479.30" y="883.75" width="37.30" height="5.08" fill="#6c34cc"/>
<rect x="479.30" y="890.43" width="37.30" height="5.08" fill="#74d46a"/>
<rect x="479.30" y="897.12" width="37.30" height="5.08" fill="#d0624a"/>
<rect x="479.30" y="903.80" width="37.30" height="3.99" fill="#78d878"/>
<rect x="479.30" y="909.53" width="37.30" height="2.99" fill="#80d0c4"/>
<rect x="479.30" y="914.42" width="37.30" height="1.59" fill="#74d46a"/>
<rect x="479.30" y="917.91" width="37.30" height="1.09" fill="#4444c4"/>
<rect x="479.30" y="920.90" width="37.30" height="1.59" fill="#90d880"/>
<rect x="479.30" y="924.40" width="37.30" height="1.09" fill="#c64aa8"/>
<rect x="479.30" y="927.39" width="37.30" height="1.39" fill="#64a8d4"/>
<rect x="479.30" y="930.68" width="37.30" height="1.39" fill="#9c4ac8"/>
<rect x="479.30" y="933.97" width="37.30" height="1.49" fill="#d0624a"/>
<rect x="479.30" y="937.36" width="37.30" height="2.49" fill="#d4d460"/>
<rect x="518.87" y="341.90" width="41.30" height="598.90" fill="#07110b"/>
<rect x="518.87" y="341.90" width="41.30" height="159.70" fill="#0a1509"/>
<rect x="518.87" y="501.60" width="41.30" height="57.00" fill="#121509"/>
<rect x="518.87" y="558.60" width="41.30" height="42.40" fill="#0a1511"/>
<rect x="518.87" y="601.00" width="41.30" height="42.10" fill="#0a150e"/>
<rect x="518.87" y="643.10" width="41.30" height="43.50" fill="#0a1511"/>
<rect x="518.87" y="686.60" width="41.30" height="42.60" fill="#11080a"/>
<rect x="518.87" y="729.20" width="41.30" height="42.30" fill="#070612"/>
<rect x="518.87" y="771.50" width="41.30" height="39.50" fill="#11080e"/>
<rect x="518.87" y="811.00" width="41.30" height="38.80" fill="#070c12"/>
<rect x="518.87" y="849.80" width="41.30" height="13.90" fill="#081213"/>
<rect x="520.87" y="343.50" width="37.30" height="157.10" fill="#6ddc4f"/>
<rect x="520.87" y="502.60" width="37.30" height="55.00" fill="#d9dc4f"/>
<rect x="520.87" y="559.60" width="37.30" height="40.40" fill="#6cdcbd"/>
<rect x="520.87" y="602.00" width="37.30" height="40.10" fill="#6ddc98"/>
<rect x="520.87" y="644.10" width="37.30" height="41.50" fill="#6cdcbd"/>
<rect x="520.87" y="687.60" width="37.30" height="40.60" fill="#d03a5e"/>
<rect x="520.87" y="730.20" width="37.30" height="40.30" fill="#3a20d6"/>
<rect x="520.87" y="772.50" width="37.30" height="37.50" fill="#d03c9c"/>
<rect x="520.87" y="812.00" width="37.30" height="36.80" fill="#3b66d6"/>
<rect x="520.87" y="850.80" width="37.30" height="11.90" fill="#4fb5dd"/>
<rect x="520.87" y="864.50" width="37.30" height="8.17" fill="#d043a4"/>
<rect x="520.87" y="874.27" width="37.30" height="7.88" fill="#d89c48"/>
<rect x="520.87" y="883.75" width="37.30" height="5.08" fill="#74d46a"/>
<rect x="520.87" y="890.43" width="37.30" height="5.08" fill="#6c34cc"/>
<rect x="520.87" y="897.12" width="37.30" height="5.08" fill="#d0624a"/>
<rect x="520.87" y="903.80" width="37.30" height="3.99" fill="#78d878"/>
<rect x="520.87" y="909.53" width="37.30" height="2.99" fill="#cc4a68"/>
<rect x="520.87" y="914.42" width="37.30" height="1.59" fill="#9c4ac8"/>
<rect x="520.87" y="917.91" width="37.30" height="1.09" fill="#80d0c4"/>
<rect x="520.87" y="920.90" width="37.30" height="1.59" fill="#d0624a"/>
<rect x="520.87" y="924.40" width="37.30" height="1.09" fill="#64a8d4"/>
<rect x="520.87" y="927.39" width="37.30" height="1.39" fill="#c64aa8"/>
<rect x="520.87" y="930.68" width="37.30" height="1.39" fill="#d89c48"/>
<rect x="520.87" y="933.97" width="37.30" height="1.49" fill="#74d46a"/>
<rect x="520.87" y="937.36" width="37.30" height="2.49" fill="#4444c4"/>
<rect x="560.44" y="347.70" width="41.30" height="593.10" fill="#07110b"/>
<rect x="560.44" y="347.70" width="41.30" height="156.10" fill="#0a1509"/>
<rect x="560.44" y="503.80" width="41.30" height="55.40" fill="#121509"/>
<rect x="560.44" y="559.20" width="41.30" height="42.20" fill="#0a1511"/>
<rect x="560.44" y="601.40" width="41.30" height="43.50" fill="#0a1511"/>
<rect x="560.44" y="644.90" width="41.30" height="42.60" fill="#11080a"/>
<rect x="560.44" y="687.50" width="41.30" height="42.30" fill="#070612"/>
<rect x="560.44" y="729.80" width="41.30" height="42.40" fill="#0a150e"/>
<rect x="560.44" y="772.20" width="41.30" height="39.50" fill="#070c12"/>
<rect x="560.44" y="811.70" width="41.30" height="38.80" fill="#11080e"/>
<rect x="560.44" y="850.50" width="41.30" height="13.20" fill="#081213"/>
<rect x="562.44" y="349.30" width="37.30" height="153.50" fill="#6ddc4f"/>
<rect x="562.44" y="504.80" width="37.30" height="53.40" fill="#d9dc4f"/>
<rect x="562.44" y="560.20" width="37.30" height="40.20" fill="#6cdcbd"/>
<rect x="562.44" y="602.40" width="37.30" height="41.50" fill="#6cdcbd"/>
<rect x="562.44" y="645.90" width="37.30" height="40.60" fill="#d03a5e"/>
<rect x="562.44" y="688.50" width="37.30" height="40.30" fill="#3a20d6"/>
<rect x="562.44" y="730.80" width="37.30" height="40.40" fill="#6ddc98"/>
<rect x="562.44" y="773.20" width="37.30" height="37.50" fill="#3b66d6"/>
<rect x="562.44" y="812.70" width="37.30" height="36.80" fill="#d03c9c"/>
<rect x="562.44" y="851.50" width="37.30" height="11.20" fill="#4fb5dd"/>
<rect x="562.44" y="864.50" width="37.30" height="8.17" fill="#d043a4"/>
<rect x="562.44" y="874.27" width="37.30" height="7.88" fill="#d89c48"/>
<rect x="562.44" y="883.75" width="37.30" height="5.08" fill="#74d46a"/>
<rect x="562.44" y="890.43" width="37.30" height="5.08" fill="#6c34cc"/>
<rect x="562.44" y="897.12" width="37.30" height="5.08" fill="#d0624a"/>
<rect x="562.44" y="903.80" width="37.30" height="3.99" fill="#78d878"/>
<rect x="562.44" y="909.53" width="37.30" height="2.99" fill="#d4d460"/>
<rect x="562.44" y="914.42" width="37.30" height="1.59" fill="#4444c4"/>
<rect x="562.44" y="917.91" width="37.30" height="1.09" fill="#80d0c4"/>
<rect x="562.44" y="920.90" width="37.30" height="1.59" fill="#d0624a"/>
<rect x="562.44" y="924.40" width="37.30" height="1.09" fill="#9c4ac8"/>
<rect x="562.44" y="927.39" width="37.30" height="1.39" fill="#9c4ac8"/>
<rect x="562.44" y="930.68" width="37.30" height="1.39" fill="#74d46a"/>
<rect x="562.44" y="933.97" width="37.30" height="1.49" fill="#80d0c4"/>
<rect x="562.44" y="937.36" width="37.30" height="2.49" fill="#64a8d4"/>
<rect x="602.01" y="341.90" width="41.30" height="598.90" fill="#07110b"/>
<rect x="602.01" y="341.90" width="41.30" height="160.40" fill="#0a1509"/>
<rect x="602.01" y="502.30" width="41.30" height="55.70" fill="#121509"/>
<rect x="602.01" y="558.00" width="41.30" height="42.30" fill="#0a1511"/>
<rect x="602.01" y="600.30" width="41.30" height="42.80" fill="#11080a"/>
<rect x="602.01" y="643.10" width="41.30" height="42.20" fill="#0a1511"/>
<rect x="602.01" y="685.30" width="41.30" height="43.40" fill="#0a150e"/>
<rect x="602.01" y="728.70" width="41.30" height="42.80" fill="#070612"/>
<rect x="602.01" y="771.50" width="41.30" height="39.50" fill="#070c12"/>
<rect x="602.01" y="811.00" width="41.30" height="38.80" fill="#11080e"/>
<rect x="602.01" y="849.80" width="41.30" height="13.20" fill="#081213"/>
<rect x="604.01" y="343.50" width="37.30" height="157.80" fill="#6ddc4f"/>
<rect x="604.01" y="503.30" width="37.30" height="53.70" fill="#d9dc4f"/>
<rect x="604.01" y="559.00" width="37.30" height="40.30" fill="#6cdcbd"/>
<rect x="604.01" y="601.30" width="37.30" height="40.80" fill="#d03a5e"/>
<rect x="604.01" y="644.10" width="37.30" height="40.20" fill="#6cdcbd"/>
<rect x="604.01" y="686.30" width="37.30" height="41.40" fill="#6ddc98"/>
<rect x="604.01" y="729.70" width="37.30" height="40.80" fill="#3a20d6"/>
<rect x="604.01" y="772.50" width="37.30" height="37.50" fill="#3b66d6"/>
<rect x="604.01" y="812.00" width="37.30" height="36.80" fill="#d03c9c"/>
<rect x="604.01" y="850.80" width="37.30" height="11.20" fill="#4fb5dd"/>
<rect x="604.01" y="863.80" width="37.30" height="8.26" fill="#d043a4"/>
<rect x="604.01" y="873.66" width="37.30" height="7.96" fill="#d89c48"/>
<rect x="604.01" y="883.22" width="37.30" height="5.14" fill="#74d46a"/>
<rect x="604.01" y="889.97" width="37.30" height="5.14" fill="#6c34cc"/>
<rect x="604.01" y="896.71" width="37.30" height="5.14" fill="#d0624a"/>
<rect x="604.01" y="903.45" width="37.30" height="4.04" fill="#78d878"/>
<rect x="604.01" y="909.24" width="37.30" height="3.03" fill="#d89c48"/>
<rect x="604.01" y="914.17" width="37.30" height="1.62" fill="#cc4a68"/>
<rect x="604.01" y="917.70" width="37.30" height="1.12" fill="#9c4ac8"/>
<rect x="604.01" y="920.71" width="37.30" height="1.62" fill="#9c4ac8"/>
<rect x="604.01" y="924.24" width="37.30" height="1.12" fill="#74d46a"/>
<rect x="604.01" y="927.26" width="37.30" height="1.42" fill="#80d0c4"/>
<rect x="604.01" y="930.58" width="37.30" height="1.42" fill="#d4d460"/>
<rect x="604.01" y="933.90" width="37.30" height="1.52" fill="#64a8d4"/>
<rect x="604.01" y="937.32" width="37.30" height="2.53" fill="#90d880"/>
<rect x="643.58" y="337.10" width="41.30" height="603.70" fill="#07110b"/>
<rect x="643.58" y="337.10" width="41.30" height="162.30" fill="#0a1509"/>
<rect x="643.58" y="499.40" width="41.30" height="55.10" fill="#121509"/>
<rect x="643.58" y="554.50" width="41.30" height="42.50" fill="#11080a"/>
<rect x="643.58" y="597.00" width="41.30" height="42.80" fill="#070612"/>
<rect x="643.58" y="639.80" width="41.30" height="42.80" fill="#0a1511"/>
<rect x="643.58" y="682.60" width="41.30" height="42.80" fill="#0a1511"/>
<rect x="643.58" y="725.40" width="41.30" height="42.40" fill="#0a150e"/>
<rect x="643.58" y="767.80" width="41.30" height="38.80" fill="#11080e"/>
<rect x="643.58" y="806.60" width="41.30" height="39.50" fill="#070c12"/>
<rect x="643.58" y="846.10" width="41.30" height="13.20" fill="#081213"/>
<rect x="645.58" y="338.70" width="37.30" height="159.70" fill="#6ddc4f"/>
<rect x="645.58" y="500.40" width="37.30" height="53.10" fill="#d9dc4f"/>
<rect x="645.58" y="555.50" width="37.30" height="40.50" fill="#d03a5e"/>
<rect x="645.58" y="598.00" width="37.30" height="40.80" fill="#3a20d6"/>
<rect x="645.58" y="640.80" width="37.30" height="40.80" fill="#6cdcbd"/>
<rect x="645.58" y="683.60" width="37.30" height="40.80" fill="#6cdcbd"/>
<rect x="645.58" y="726.40" width="37.30" height="40.40" fill="#6ddc98"/>
<rect x="645.58" y="768.80" width="37.30" height="36.80" fill="#d03c9c"/>
<rect x="645.58" y="807.60" width="37.30" height="37.50" fill="#3b66d6"/>
<rect x="645.58" y="847.10" width="37.30" height="11.20" fill="#4fb5dd"/>
<rect x="645.58" y="860.10" width="37.30" height="8.73" fill="#d043a4"/>
<rect x="645.58" y="870.43" width="37.30" height="8.42" fill="#d89c48"/>
<rect x="645.58" y="880.45" width="37.30" height="5.46" fill="#6c34cc"/>
<rect x="645.58" y="887.51" width="37.30" height="5.46" fill="#74d46a"/>
<rect x="645.58" y="894.58" width="37.30" height="5.46" fill="#d0624a"/>
<rect x="645.58" y="901.64" width="37.30" height="4.30" fill="#78d878"/>
<rect x="645.58" y="907.55" width="37.30" height="3.57" fill="#80d0c4"/>
<rect x="645.58" y="912.86" width="37.30" height="1.79" fill="#c64aa8"/>
<rect x="645.58" y="916.55" width="37.30" height="1.26" fill="#80d0c4"/>
<rect x="645.58" y="919.71" width="37.30" height="1.79" fill="#d4d460"/>
<rect x="645.58" y="923.40" width="37.30" height="1.26" fill="#64a8d4"/>
<rect x="645.58" y="926.57" width="37.30" height="1.58" fill="#74d46a"/>
<rect x="645.58" y="930.05" width="37.30" height="1.58" fill="#90d880"/>
<rect x="645.58" y="933.53" width="37.30" height="1.68" fill="#d89c48"/>
<rect x="645.58" y="937.11" width="37.30" height="2.74" fill="#cc4a68"/>
<rect x="685.15" y="344.20" width="41.30" height="596.60" fill="#07110b"/>
<rect x="685.15" y="344.20" width="41.30" height="161.40" fill="#0a1509"/>
<rect x="685.15" y="505.60" width="41.30" height="54.00" fill="#121509"/>
<rect x="685.15" y="559.60" width="41.30" height="43.70" fill="#070612"/>
<rect x="685.15" y="603.30" width="41.30" height="42.40" fill="#11080a"/>
<rect x="685.15" y="645.70" width="41.30" height="42.30" fill="#0a1511"/>
<rect x="685.15" y="688.00" width="41.30" height="43.30" fill="#0a1511"/>
<rect x="685.15" y="731.30" width="41.30" height="41.90" fill="#0a150e"/>
<rect x="685.15" y="773.20" width="41.30" height="39.60" fill="#11080e"/>
<rect x="685.15" y="812.80" width="41.30" height="38.80" fill="#070c12"/>
<rect x="685.15" y="851.60" width="41.30" height="12.80" fill="#081213"/>
<rect x="687.15" y="345.80" width="37.30" height="158.80" fill="#6ddc4f"/>
<rect x="687.15" y="506.60" width="37.30" height="52.00" fill="#d9dc4f"/>
<rect x="687.15" y="560.60" width="37.30" height="41.70" fill="#3a20d6"/>
<rect x="687.15" y="604.30" width="37.30" height="40.40" fill="#d03a5e"/>
<rect x="687.15" y="646.70" width="37.30" height="40.30" fill="#6cdcbd"/>
<rect x="687.15" y="689.00" width="37.30" height="41.30" fill="#6cdcbd"/>
<rect x="687.15" y="732.30" width="37.30" height="39.90" fill="#6ddc98"/>
<rect x="687.15" y="774.20" width="37.30" height="37.60" fill="#d03c9c"/>
<rect x="687.15" y="813.80" width="37.30" height="36.80" fill="#3b66d6"/>
<rect x="687.15" y="852.60" width="37.30" height="10.80" fill="#4fb5dd"/>
<rect x="687.15" y="865.20" width="37.30" height="8.09" fill="#d043a4"/>
<rect x="687.15" y="874.89" width="37.30" height="7.79" fill="#d89c48"/>
<rect x="687.15" y="884.28" width="37.30" height="5.02" fill="#6c34cc"/>
<rect x="687.15" y="890.90" width="37.30" height="5.02" fill="#74d46a"/>
<rect x="687.15" y="897.52" width="37.30" height="5.02" fill="#d0624a"/>
<rect x="687.15" y="904.14" width="37.30" height="3.93" fill="#78d878"/>
<rect x="687.15" y="909.83" width="37.30" height="2.94" fill="#c64aa8"/>
<rect x="687.15" y="914.67" width="37.30" height="1.56" fill="#d89c48"/>
<rect x="687.15" y="918.13" width="37.30" height="1.07" fill="#80d0c4"/>
<rect x="687.15" y="921.09" width="37.30" height="1.56" fill="#d4d460"/>
<rect x="687.15" y="924.55" width="37.30" height="1.07" fill="#80d0c4"/>
<rect x="687.15" y="927.52" width="37.30" height="1.36" fill="#9c4ac8"/>
<rect x="687.15" y="930.78" width="37.30" height="1.36" fill="#4444c4"/>
<rect x="687.15" y="934.04" width="37.30" height="1.46" fill="#cc4a68"/>
<rect x="687.15" y="937.40" width="37.30" height="2.45" fill="#d0624a"/>
<rect x="726.72" y="316.50" width="41.30" height="624.30" fill="#07110b"/>
<rect x="726.72" y="316.50" width="41.30" height="161.40" fill="#0a1509"/>
<rect x="726.72" y="477.90" width="41.30" height="57.40" fill="#121509"/>
<rect x="726.72" y="535.30" width="41.30" height="46.40" fill="#070612"/>
<rect x="726.72" y="581.70" width="41.30" height="45.30" fill="#0a1511"/>
<rect x="726.72" y="627.00" width="41.30" height="43.10" fill="#0a1511"/>
<rect x="726.72" y="670.10" width="41.30" height="44.20" fill="#11080a"/>
<rect x="726.72" y="714.30" width="41.30" height="41.90" fill="#0a150e"/>
<rect x="726.72" y="756.20" width="41.30" height="39.60" fill="#070c12"/>
<rect x="726.72" y="795.80" width="41.30" height="37.20" fill="#11080e"/>
<rect x="726.72" y="833.00" width="41.30" height="13.30" fill="#081213"/>
<rect x="728.72" y="318.10" width="37.30" height="158.80" fill="#6ddc4f"/>
<rect x="728.72" y="478.90" width="37.30" height="55.40" fill="#d9dc4f"/>
<rect x="728.72" y="536.30" width="37.30" height="44.40" fill="#3a20d6"/>
<rect x="728.72" y="582.70" width="37.30" height="43.30" fill="#6cdcbd"/>
<rect x="728.72" y="628.00" width="37.30" height="41.10" fill="#6cdcbd"/>
<rect x="728.72" y="671.10" width="37.30" height="42.20" fill="#d03a5e"/>
<rect x="728.72" y="715.30" width="37.30" height="39.90" fill="#6ddc98"/>
<rect x="728.72" y="757.20" width="37.30" height="37.60" fill="#3b66d6"/>
<rect x="728.72" y="796.80" width="37.30" height="35.20" fill="#d03c9c"/>
<rect x="728.72" y="834.00" width="37.30" height="11.30" fill="#4fb5dd"/>
<rect x="728.72" y="847.10" width="37.30" height="10.38" fill="#d043a4"/>
<rect x="728.72" y="859.08" width="37.30" height="10.01" fill="#d89c48"/>
<rect x="728.72" y="870.69" width="37.30" height="6.59" fill="#74d46a"/>
<rect x="728.72" y="878.89" width="37.30" height="6.59" fill="#6c34cc"/>
<rect x="728.72" y="887.08" width="37.30" height="6.59" fill="#d0624a"/>
<rect x="728.72" y="895.27" width="37.30" height="5.25" fill="#78d878"/>
<rect x="728.72" y="902.11" width="37.30" height="4.39" fill="#64a8d4"/>
<rect x="728.72" y="908.25" width="37.30" height="2.38" fill="#74d46a"/>
<rect x="728.72" y="912.53" width="37.30" height="1.77" fill="#90d880"/>
<rect x="728.72" y="916.20" width="37.30" height="2.38" fill="#9c4ac8"/>
<rect x="728.72" y="920.48" width="37.30" height="1.77" fill="#d89c48"/>
<rect x="728.72" y="924.15" width="37.30" height="2.13" fill="#d0624a"/>
<rect x="728.72" y="928.18" width="37.30" height="2.13" fill="#cc4a68"/>
<rect x="728.72" y="932.21" width="37.30" height="2.26" fill="#4444c4"/>
<rect x="728.72" y="936.22" width="37.30" height="3.78" fill="#c64aa8"/>
<rect x="768.29" y="323.40" width="41.30" height="617.40" fill="#07110b"/>
<rect x="768.29" y="323.40" width="41.30" height="167.80" fill="#0a1509"/>
<rect x="768.29" y="491.20" width="41.30" height="57.30" fill="#121509"/>
<rect x="768.29" y="548.50" width="41.30" height="42.50" fill="#0a1511"/>
<rect x="768.29" y="591.00" width="41.30" height="44.20" fill="#070612"/>
<rect x="768.29" y="635.20" width="41.30" height="41.90" fill="#0a1511"/>
<rect x="768.29" y="677.10" width="41.30" height="42.60" fill="#11080a"/>
<rect x="768.29" y="719.70" width="41.30" height="42.80" fill="#0a150e"/>
<rect x="768.29" y="762.50" width="41.30" height="39.50" fill="#11080e"/>
<rect x="768.29" y="802.00" width="41.30" height="39.20" fill="#070c12"/>
<rect x="768.29" y="841.20" width="41.30" height="13.50" fill="#081213"/>
<rect x="770.29" y="325.00" width="37.30" height="165.20" fill="#6ddc4f"/>
<rect x="770.29" y="492.20" width="37.30" height="55.30" fill="#d9dc4f"/>
<rect x="770.29" y="549.50" width="37.30" height="40.50" fill="#6cdcbd"/>
<rect x="770.29" y="592.00" width="37.30" height="42.20" fill="#3a20d6"/>
<rect x="770.29" y="636.20" width="37.30" height="39.90" fill="#6cdcbd"/>
<rect x="770.29" y="678.10" width="37.30" height="40.60" fill="#d03a5e"/>
<rect x="770.29" y="720.70" width="37.30" height="40.80" fill="#6ddc98"/>
<rect x="770.29" y="763.50" width="37.30" height="37.50" fill="#d03c9c"/>
<rect x="770.29" y="803.00" width="37.30" height="37.20" fill="#3b66d6"/>
<rect x="770.29" y="842.20" width="37.30" height="11.50" fill="#4fb5dd"/>
<rect x="770.29" y="855.50" width="37.30" height="9.32" fill="#d043a4"/>
<rect x="770.29" y="866.42" width="37.30" height="8.98" fill="#d89c48"/>
<rect x="770.29" y="877.00" width="37.30" height="5.86" fill="#6c34cc"/>
<rect x="770.29" y="884.46" width="37.30" height="5.86" fill="#74d46a"/>
<rect x="770.29" y="891.92" width="37.30" height="5.86" fill="#d0624a"/>
<rect x="770.29" y="899.39" width="37.30" height="4.64" fill="#78d878"/>
<rect x="770.29" y="905.62" width="37.30" height="3.86" fill="#cc4a68"/>
<rect x="770.29" y="911.23" width="37.30" height="2.00" fill="#d4d460"/>
<rect x="770.29" y="915.13" width="37.30" height="1.44" fill="#9c4ac8"/>
<rect x="770.29" y="918.47" width="37.30" height="2.00" fill="#c64aa8"/>
<rect x="770.29" y="922.37" width="37.30" height="1.44" fill="#80d0c4"/>
<rect x="770.29" y="925.71" width="37.30" height="1.78" fill="#64a8d4"/>
<rect x="770.29" y="929.39" width="37.30" height="1.78" fill="#d89c48"/>
<rect x="770.29" y="933.06" width="37.30" height="1.89" fill="#80d0c4"/>
<rect x="770.29" y="936.85" width="37.30" height="3.00" fill="#90d880"/>
<rect x="809.86" y="344.40" width="41.30" height="596.40" fill="#07110b"/>
<rect x="809.86" y="344.40" width="41.30" height="159.40" fill="#0a1509"/>
<rect x="809.86" y="503.80" width="41.30" height="56.30" fill="#121509"/>
<rect x="809.86" y="560.10" width="41.30" height="42.50" fill="#0a1511"/>
<rect x="809.86" y="602.60" width="41.30" height="43.10" fill="#070612"/>
<rect x="809.86" y="645.70" width="41.30" height="43.00" fill="#0a1511"/>
<rect x="809.86" y="688.70" width="41.30" height="41.90" fill="#0a150e"/>
<rect x="809.86" y="730.60" width="41.30" height="43.10" fill="#11080a"/>
<rect x="809.86" y="773.70" width="41.30" height="39.10" fill="#11080e"/>
<rect x="809.86" y="812.80" width="41.30" height="38.80" fill="#070c12"/>
<rect x="809.86" y="851.60" width="41.30" height="13.30" fill="#081213"/>
<rect x="811.86" y="346.00" width="37.30" height="156.80" fill="#6ddc4f"/>
<rect x="811.86" y="504.80" width="37.30" height="54.30" fill="#d9dc4f"/>
<rect x="811.86" y="561.10" width="37.30" height="40.50" fill="#6cdcbd"/>
<rect x="811.86" y="603.60" width="37.30" height="41.10" fill="#3a20d6"/>
<rect x="811.86" y="646.70" width="37.30" height="41.00" fill="#6cdcbd"/>
<rect x="811.86" y="689.70" width="37.30" height="39.90" fill="#6ddc98"/>
<rect x="811.86" y="731.60" width="37.30" height="41.10" fill="#d03a5e"/>
<rect x="811.86" y="774.70" width="37.30" height="37.10" fill="#d03c9c"/>
<rect x="811.86" y="813.80" width="37.30" height="36.80" fill="#3b66d6"/>
<rect x="811.86" y="852.60" width="37.30" height="11.30" fill="#4fb5dd"/>
<rect x="811.86" y="865.70" width="37.30" height="8.02" fill="#d043a4"/>
<rect x="811.86" y="875.32" width="37.30" height="7.73" fill="#d89c48"/>
<rect x="811.86" y="884.65" width="37.30" height="4.98" fill="#6c34cc"/>
<rect x="811.86" y="891.23" width="37.30" height="4.98" fill="#74d46a"/>
<rect x="811.86" y="897.81" width="37.30" height="4.98" fill="#d0624a"/>
<rect x="811.86" y="904.39" width="37.30" height="3.90" fill="#78d878"/>
<rect x="811.86" y="910.03" width="37.30" height="2.91" fill="#cc4a68"/>
<rect x="811.86" y="914.85" width="37.30" height="1.54" fill="#9c4ac8"/>
<rect x="811.86" y="918.28" width="37.30" height="1.05" fill="#d89c48"/>
<rect x="811.86" y="921.23" width="37.30" height="1.54" fill="#80d0c4"/>
<rect x="811.86" y="924.67" width="37.30" height="1.05" fill="#64a8d4"/>
<rect x="811.86" y="927.61" width="37.30" height="1.34" fill="#9c4ac8"/>
<rect x="811.86" y="930.85" width="37.30" height="1.34" fill="#80d0c4"/>
<rect x="811.86" y="934.09" width="37.30" height="1.44" fill="#d4d460"/>
<rect x="811.86" y="937.43" width="37.30" height="2.42" fill="#c64aa8"/>
<rect x="851.43" y="344.80" width="41.30" height="596.00" fill="#07110b"/>
<rect x="851.43" y="344.80" width="41.30" height="158.60" fill="#0a1509"/>
<rect x="851.43" y="503.40" width="41.30" height="56.00" fill="#121509"/>
<rect x="851.43" y="559.40" width="41.30" height="42.10" fill="#0a1511"/>
<rect x="851.43" y="601.50" width="41.30" height="43.00" fill="#0a150e"/>
<rect x="851.43" y="644.50" width="41.30" height="43.10" fill="#070612"/>
<rect x="851.43" y="687.60" width="41.30" height="42.30" fill="#11080a"/>
<rect x="851.43" y="729.90" width="41.30" height="42.60" fill="#0a1511"/>
<rect x="851.43" y="772.50" width="41.30" height="39.60" fill="#11080e"/>
<rect x="851.43" y="812.10" width="41.30" height="38.80" fill="#070c12"/>
<rect x="851.43" y="850.90" width="41.30" height="13.00" fill="#081213"/>
<rect x="853.43" y="346.40" width="37.30" height="156.00" fill="#6ddc4f"/>
<rect x="853.43" y="504.40" width="37.30" height="54.00" fill="#d9dc4f"/>
<rect x="853.43" y="560.40" width="37.30" height="40.10" fill="#6cdcbd"/>
<rect x="853.43" y="602.50" width="37.30" height="41.00" fill="#6ddc98"/>
<rect x="853.43" y="645.50" width="37.30" height="41.10" fill="#3a20d6"/>
<rect x="853.43" y="688.60" width="37.30" height="40.30" fill="#d03a5e"/>
<rect x="853.43" y="730.90" width="37.30" height="40.60" fill="#6cdcbd"/>
<rect x="853.43" y="773.50" width="37.30" height="37.60" fill="#d03c9c"/>
<rect x="853.43" y="813.10" width="37.30" height="36.80" fill="#3b66d6"/>
<rect x="853.43" y="851.90" width="37.30" height="11.00" fill="#4fb5dd"/>
<rect x="853.43" y="864.70" width="37.30" height="8.15" fill="#d043a4"/>
<rect x="853.43" y="874.45" width="37.30" height="7.85" fill="#d89c48"/>
<rect x="853.43" y="883.90" width="37.30" height="5.07" fill="#6c34cc"/>
<rect x="853.43" y="890.57" width="37.30" height="5.07" fill="#74d46a"/>
<rect x="853.43" y="897.23" width="37.30" height="5.07" fill="#d0624a"/>
<rect x="853.43" y="903.90" width="37.30" height="3.97" fill="#78d878"/>
<rect x="853.43" y="909.62" width="37.30" height="2.97" fill="#80d0c4"/>
<rect x="853.43" y="914.49" width="37.30" height="1.58" fill="#cc4a68"/>
<rect x="853.43" y="917.97" width="37.30" height="1.08" fill="#d89c48"/>
<rect x="853.43" y="920.96" width="37.30" height="1.58" fill="#9c4ac8"/>
<rect x="853.43" y="924.44" width="37.30" height="1.08" fill="#64a8d4"/>
<rect x="853.43" y="927.42" width="37.30" height="1.38" fill="#c64aa8"/>
<rect x="853.43" y="930.71" width="37.30" height="1.38" fill="#d0624a"/>
<rect x="853.43" y="933.99" width="37.30" height="1.48" fill="#80d0c4"/>
<rect x="853.43" y="937.37" width="37.30" height="2.48" fill="#74d46a"/>
<rect x="893.00" y="348.10" width="41.30" height="592.70" fill="#07110b"/>
<rect x="893.00" y="348.10" width="41.30" height="157.90" fill="#0a1509"/>
<rect x="893.00" y="506.00" width="41.30" height="55.30" fill="#121509"/>
<rect x="893.00" y="561.30" width="41.30" height="42.90" fill="#0a1511"/>
<rect x="893.00" y="604.20" width="41.30" height="42.60" fill="#0a150e"/>
<rect x="893.00" y="646.80" width="41.30" height="42.60" fill="#11080a"/>
<rect x="893.00" y="689.40" width="41.30" height="42.40" fill="#070612"/>
<rect x="893.00" y="731.80" width="41.30" height="42.30" fill="#0a1511"/>
<rect x="893.00" y="774.10" width="41.30" height="38.70" fill="#070c12"/>
<rect x="893.00" y="812.80" width="41.30" height="38.10" fill="#11080e"/>
<rect x="893.00" y="850.90" width="41.30" height="13.10" fill="#081213"/>
<rect x="895.00" y="349.70" width="37.30" height="155.30" fill="#6ddc4f"/>
<rect x="895.00" y="507.00" width="37.30" height="53.30" fill="#d9dc4f"/>
<rect x="895.00" y="562.30" width="37.30" height="40.90" fill="#6cdcbd"/>
<rect x="895.00" y="605.20" width="37.30" height="40.60" fill="#6ddc98"/>
<rect x="895.00" y="647.80" width="37.30" height="40.60" fill="#d03a5e"/>
<rect x="895.00" y="690.40" width="37.30" height="40.40" fill="#3a20d6"/>
<rect x="895.00" y="732.80" width="37.30" height="40.30" fill="#6cdcbd"/>
<rect x="895.00" y="775.10" width="37.30" height="36.70" fill="#3b66d6"/>
<rect x="895.00" y="813.80" width="37.30" height="36.10" fill="#d03c9c"/>
<rect x="895.00" y="851.90" width="37.30" height="11.10" fill="#4fb5dd"/>
<rect x="895.00" y="864.80" width="37.30" height="8.14" fill="#d043a4"/>
<rect x="895.00" y="874.54" width="37.30" height="7.84" fill="#d89c48"/>
<rect x="895.00" y="883.98" width="37.30" height="5.06" fill="#6c34cc"/>
<rect x="895.00" y="890.63" width="37.30" height="5.06" fill="#74d46a"/>
<rect x="895.00" y="897.29" width="37.30" height="5.06" fill="#d0624a"/>
<rect x="895.00" y="903.95" width="37.30" height="3.96" fill="#78d878"/>
<rect x="895.00" y="909.66" width="37.30" height="2.97" fill="#80d0c4"/>
<rect x="895.00" y="914.53" width="37.30" height="1.58" fill="#9c4ac8"/>
<rect x="895.00" y="918.00" width="37.30" height="1.08" fill="#d89c48"/>
<rect x="895.00" y="920.99" width="37.30" height="1.58" fill="#d4d460"/>
<rect x="895.00" y="924.46" width="37.30" height="1.08" fill="#64a8d4"/>
<rect x="895.00" y="927.44" width="37.30" height="1.38" fill="#9c4ac8"/>
<rect x="895.00" y="930.72" width="37.30" height="1.38" fill="#90d880"/>
<rect x="895.00" y="934.00" width="37.30" height="1.48" fill="#d0624a"/>
<rect x="895.00" y="937.38" width="37.30" height="2.47" fill="#4444c4"/>
<rect x="934.57" y="354.80" width="41.30" height="586.00" fill="#07110b"/>
<rect x="934.57" y="354.80" width="41.30" height="154.50" fill="#0a1509"/>
<rect x="934.57" y="509.30" width="41.30" height="54.00" fill="#121509"/>
<rect x="934.57" y="563.30" width="41.30" height="42.30" fill="#070612"/>
<rect x="934.57" y="605.60" width="41.30" height="42.40" fill="#0a150e"/>
<rect x="934.57" y="648.00" width="41.30" height="43.00" fill="#0a1511"/>
<rect x="934.57" y="691.00" width="41.30" height="41.20" fill="#0a1511"/>
<rect x="934.57" y="732.20" width="41.30" height="41.50" fill="#11080a"/>
<rect x="934.57" y="773.70" width="41.30" height="38.30" fill="#070c12"/>
<rect x="934.57" y="812.00" width="41.30" height="38.50" fill="#11080e"/>
<rect x="934.57" y="850.50" width="41.30" height="13.50" fill="#081213"/>
<rect x="936.57" y="356.40" width="37.30" height="151.90" fill="#6ddc4f"/>
<rect x="936.57" y="510.30" width="37.30" height="52.00" fill="#d9dc4f"/>
<rect x="936.57" y="564.30" width="37.30" height="40.30" fill="#3a20d6"/>
<rect x="936.57" y="606.60" width="37.30" height="40.40" fill="#6ddc98"/>
<rect x="936.57" y="649.00" width="37.30" height="41.00" fill="#6cdcbd"/>
<rect x="936.57" y="692.00" width="37.30" height="39.20" fill="#6cdcbd"/>
<rect x="936.57" y="733.20" width="37.30" height="39.50" fill="#d03a5e"/>
<rect x="936.57" y="774.70" width="37.30" height="36.30" fill="#3b66d6"/>
<rect x="936.57" y="813.00" width="37.30" height="36.50" fill="#d03c9c"/>
<rect x="936.57" y="851.50" width="37.30" height="11.50" fill="#4fb5dd"/>
<rect x="936.57" y="864.80" width="37.30" height="8.14" fill="#d043a4"/>
<rect x="936.57" y="874.54" width="37.30" height="7.84" fill="#d89c48"/>
<rect x="936.57" y="883.98" width="37.30" height="5.06" fill="#6c34cc"/>
<rect x="936.57" y="890.63" width="37.30" height="5.06" fill="#74d46a"/>
<rect x="936.57" y="897.29" width="37.30" height="5.06" fill="#d0624a"/>
<rect x="936.57" y="903.95" width="37.30" height="3.96" fill="#78d878"/>
<rect x="936.57" y="909.66" width="37.30" height="2.97" fill="#9c4ac8"/>
<rect x="936.57" y="914.53" width="37.30" height="1.58" fill="#c64aa8"/>
<rect x="936.57" y="918.00" width="37.30" height="1.08" fill="#4444c4"/>
<rect x="936.57" y="920.99" width="37.30" height="1.58" fill="#d0624a"/>
<rect x="936.57" y="924.46" width="37.30" height="1.08" fill="#90d880"/>
<rect x="936.57" y="927.44" width="37.30" height="1.38" fill="#74d46a"/>
<rect x="936.57" y="930.72" width="37.30" height="1.38" fill="#d89c48"/>
<rect x="936.57" y="934.00" width="37.30" height="1.48" fill="#80d0c4"/>
<rect x="936.57" y="937.38" width="37.30" height="2.47" fill="#80d0c4"/>
<rect x="976.14" y="363.20" width="41.30" height="577.60" fill="#07110b"/>
<rect x="976.14" y="363.20" width="41.30" height="157.00" fill="#0a1509"/>
<rect x="976.14" y="520.20" width="41.30" height="53.30" fill="#121509"/>
<rect x="976.14" y="573.50" width="41.30" height="40.80" fill="#0a1511"/>
<rect x="976.14" y="614.30" width="41.30" height="41.10" fill="#070612"/>
<rect x="976.14" y="655.40" width="41.30" height="40.30" fill="#0a150e"/>
<rect x="976.14" y="695.70" width="41.30" height="40.30" fill="#11080a"/>
<rect x="976.14" y="736.00" width="41.30" height="39.50" fill="#0a1511"/>
<rect x="976.14" y="775.50" width="41.30" height="38.20" fill="#070c12"/>
<rect x="976.14" y="813.70" width="41.30" height="38.60" fill="#11080e"/>
<rect x="976.14" y="852.30" width="41.30" height="13.30" fill="#081213"/>
<rect x="978.14" y="364.80" width="37.30" height="154.40" fill="#6ddc4f"/>
<rect x="978.14" y="521.20" width="37.30" height="51.30" fill="#d9dc4f"/>
<rect x="978.14" y="574.50" width="37.30" height="38.80" fill="#6cdcbd"/>
<rect x="978.14" y="615.30" width="37.30" height="39.10" fill="#3a20d6"/>
<rect x="978.14" y="656.40" width="37.30" height="38.30" fill="#6ddc98"/>
<rect x="978.14" y="696.70" width="37.30" height="38.30" fill="#d03a5e"/>
<rect x="978.14" y="737.00" width="37.30" height="37.50" fill="#6cdcbd"/>
<rect x="978.14" y="776.50" width="37.30" height="36.20" fill="#3b66d6"/>
<rect x="978.14" y="814.70" width="37.30" height="36.60" fill="#d03c9c"/>
<rect x="978.14" y="853.30" width="37.30" height="11.30" fill="#4fb5dd"/>
<rect x="978.14" y="866.40" width="37.30" height="7.93" fill="#d043a4"/>
<rect x="978.14" y="875.93" width="37.30" height="7.64" fill="#d89c48"/>
<rect x="978.14" y="885.18" width="37.30" height="4.92" fill="#6c34cc"/>
<rect x="978.14" y="891.69" width="37.30" height="4.92" fill="#74d46a"/>
<rect x="978.14" y="898.21" width="37.30" height="4.92" fill="#d0624a"/>
<rect x="978.14" y="904.73" width="37.30" height="3.85" fill="#78d878"/>
<rect x="978.14" y="910.33" width="37.30" height="2.87" fill="#90d880"/>
<rect x="978.14" y="915.09" width="37.30" height="1.50" fill="#9c4ac8"/>
<rect x="978.14" y="918.50" width="37.30" height="1.02" fill="#c64aa8"/>
<rect x="978.14" y="921.42" width="37.30" height="1.50" fill="#74d46a"/>
<rect x="978.14" y="924.82" width="37.30" height="1.02" fill="#80d0c4"/>
<rect x="978.14" y="927.74" width="37.30" height="1.31" fill="#4444c4"/>
<rect x="978.14" y="930.95" width="37.30" height="1.31" fill="#80d0c4"/>
<rect x="978.14" y="934.16" width="37.30" height="1.41" fill="#d0624a"/>
<rect x="978.14" y="937.47" width="37.30" height="2.38" fill="#d89c48"/>
<rect x="1017.71" y="375.10" width="41.30" height="565.70" fill="#07110b"/>
<rect x="1017.71" y="375.10" width="41.30" height="154.50" fill="#0a1509"/>
<rect x="1017.71" y="529.60" width="41.30" height="52.20" fill="#121509"/>
<rect x="1017.71" y="581.80" width="41.30" height="40.60" fill="#0a1511"/>
<rect x="1017.71" y="622.40" width="41.30" height="40.00" fill="#0a150e"/>
<rect x="1017.71" y="662.40" width="41.30" height="39.10" fill="#0a1511"/>
<rect x="1017.71" y="701.50" width="41.30" height="39.10" fill="#070612"/>
<rect x="1017.71" y="740.60" width="41.30" height="37.70" fill="#11080a"/>
<rect x="1017.71" y="778.30" width="41.30" height="36.80" fill="#11080e"/>
<rect x="1017.71" y="815.10" width="41.30" height="34.20" fill="#070c12"/>
<rect x="1017.71" y="849.30" width="41.30" height="12.80" fill="#081213"/>
<rect x="1019.71" y="376.70" width="37.30" height="151.90" fill="#6ddc4f"/>
<rect x="1019.71" y="530.60" width="37.30" height="50.20" fill="#d9dc4f"/>
<rect x="1019.71" y="582.80" width="37.30" height="38.60" fill="#6cdcbd"/>
<rect x="1019.71" y="623.40" width="37.30" height="38.00" fill="#6ddc98"/>
<rect x="1019.71" y="663.40" width="37.30" height="37.10" fill="#6cdcbd"/>
<rect x="1019.71" y="702.50" width="37.30" height="37.10" fill="#3a20d6"/>
<rect x="1019.71" y="741.60" width="37.30" height="35.70" fill="#d03a5e"/>
<rect x="1019.71" y="779.30" width="37.30" height="34.80" fill="#d03c9c"/>
<rect x="1019.71" y="816.10" width="37.30" height="32.20" fill="#3b66d6"/>
<rect x="1019.71" y="850.30" width="37.30" height="10.80" fill="#4fb5dd"/>
<rect x="1019.71" y="862.90" width="37.30" height="8.38" fill="#d043a4"/>
<rect x="1019.71" y="872.88" width="37.30" height="8.07" fill="#d89c48"/>
<rect x="1019.71" y="882.55" width="37.30" height="5.22" fill="#74d46a"/>
<rect x="1019.71" y="889.37" width="37.30" height="5.22" fill="#6c34cc"/>
<rect x="1019.71" y="896.19" width="37.30" height="5.22" fill="#d0624a"/>
<rect x="1019.71" y="903.01" width="37.30" height="4.10" fill="#78d878"/>
<rect x="1019.71" y="908.87" width="37.30" height="3.09" fill="#d0624a"/>
<rect x="1019.71" y="913.85" width="37.30" height="1.66" fill="#9c4ac8"/>
<rect x="1019.71" y="917.42" width="37.30" height="1.15" fill="#74d46a"/>
<rect x="1019.71" y="920.47" width="37.30" height="1.66" fill="#80d0c4"/>
<rect x="1019.71" y="924.03" width="37.30" height="1.15" fill="#80d0c4"/>
<rect x="1019.71" y="927.09" width="37.30" height="1.46" fill="#d4d460"/>
<rect x="1019.71" y="930.45" width="37.30" height="1.46" fill="#90d880"/>
<rect x="1019.71" y="933.81" width="37.30" height="1.56" fill="#c64aa8"/>
<rect x="1019.71" y="937.27" width="37.30" height="2.58" fill="#9c4ac8"/>
<rect x="1059.28" y="435.00" width="41.30" height="505.80" fill="#07110b"/>
<rect x="1059.28" y="435.00" width="41.30" height="136.50" fill="#0a1509"/>
<rect x="1059.28" y="571.50" width="41.30" height="45.10" fill="#121509"/>
<rect x="1059.28" y="616.60" width="41.30" height="37.90" fill="#0a1511"/>
<rect x="1059.28" y="654.50" width="41.30" height="37.20" fill="#0a1511"/>
<rect x="1059.28" y="691.70" width="41.30" height="35.00" fill="#0a150e"/>
<rect x="1059.28" y="726.70" width="41.30" height="34.90" fill="#070612"/>
<rect x="1059.28" y="761.60" width="41.30" height="34.90" fill="#070c12"/>
<rect x="1059.28" y="796.50" width="41.30" height="34.20" fill="#11080a"/>
<rect x="1059.28" y="830.70" width="41.30" height="34.20" fill="#11080e"/>
<rect x="1059.28" y="864.90" width="41.30" height="11.70" fill="#081213"/>
<rect x="1061.28" y="436.60" width="37.30" height="133.90" fill="#6ddc4f"/>
<rect x="1061.28" y="572.50" width="37.30" height="43.10" fill="#d9dc4f"/>
<rect x="1061.28" y="617.60" width="37.30" height="35.90" fill="#6cdcbd"/>
<rect x="1061.28" y="655.50" width="37.30" height="35.20" fill="#6cdcbd"/>
<rect x="1061.28" y="692.70" width="37.30" height="33.00" fill="#6ddc98"/>
<rect x="1061.28" y="727.70" width="37.30" height="32.90" fill="#3a20d6"/>
<rect x="1061.28" y="762.60" width="37.30" height="32.90" fill="#3b66d6"/>
<rect x="1061.28" y="797.50" width="37.30" height="32.20" fill="#d03a5e"/>
<rect x="1061.28" y="831.70" width="37.30" height="32.20" fill="#d03c9c"/>
<rect x="1061.28" y="865.90" width="37.30" height="9.70" fill="#4fb5dd"/>
<rect x="1061.28" y="877.40" width="37.30" height="6.54" fill="#d043a4"/>
<rect x="1061.28" y="885.54" width="37.30" height="6.29" fill="#d89c48"/>
<rect x="1061.28" y="893.43" width="37.30" height="3.96" fill="#6c34cc"/>
<rect x="1061.28" y="898.99" width="37.30" height="3.96" fill="#74d46a"/>
<rect x="1061.28" y="904.56" width="37.30" height="3.96" fill="#d0624a"/>
<rect x="1061.28" y="910.27" width="37.30" height="2.75" fill="#78d878"/>
<rect x="1061.28" y="914.92" width="37.30" height="2.17" fill="#9c4ac8"/>
<rect x="1061.28" y="918.99" width="37.30" height="1.01" fill="#d0624a"/>
<rect x="1061.28" y="921.90" width="37.30" height="0.59" fill="#80d0c4"/>
<rect x="1061.28" y="924.39" width="37.30" height="1.01" fill="#74d46a"/>
<rect x="1061.28" y="927.30" width="37.30" height="0.59" fill="#cc4a68"/>
<rect x="1061.28" y="929.79" width="37.30" height="0.84" fill="#d4d460"/>
<rect x="1061.28" y="932.53" width="37.30" height="0.84" fill="#c64aa8"/>
<rect x="1061.28" y="935.27" width="37.30" height="0.92" fill="#d89c48"/>
<rect x="1061.28" y="938.10" width="37.30" height="1.75" fill="#9c4ac8"/>
<rect x="1100.85" y="374.20" width="41.30" height="566.60" fill="#07110b"/>
<rect x="1100.85" y="374.20" width="41.30" height="150.70" fill="#0a1509"/>
<rect x="1100.85" y="524.90" width="41.30" height="47.50" fill="#121509"/>
<rect x="1100.85" y="572.40" width="41.30" height="40.70" fill="#0a150e"/>
<rect x="1100.85" y="613.10" width="41.30" height="39.60" fill="#0a1511"/>
<rect x="1100.85" y="652.70" width="41.30" height="38.40" fill="#070612"/>
<rect x="1100.85" y="691.10" width="41.30" height="37.20" fill="#070c12"/>
<rect x="1100.85" y="728.30" width="41.30" height="37.30" fill="#0a1511"/>
<rect x="1100.85" y="765.60" width="41.30" height="35.60" fill="#11080a"/>
<rect x="1100.85" y="801.20" width="41.30" height="34.20" fill="#11080e"/>
<rect x="1100.85" y="835.40" width="41.30" height="19.90" fill="#11080e"/>
<rect x="1100.85" y="855.30" width="41.30" height="11.00" fill="#081213"/>
<rect x="1102.85" y="375.80" width="37.30" height="148.10" fill="#6ddc4f"/>
<rect x="1102.85" y="525.90" width="37.30" height="45.50" fill="#d9dc4f"/>
<rect x="1102.85" y="573.40" width="37.30" height="38.70" fill="#6ddc98"/>
<rect x="1102.85" y="614.10" width="37.30" height="37.60" fill="#6cdcbd"/>
<rect x="1102.85" y="653.70" width="37.30" height="36.40" fill="#3a20d6"/>
<rect x="1102.85" y="692.10" width="37.30" height="35.20" fill="#3b66d6"/>
<rect x="1102.85" y="729.30" width="37.30" height="35.30" fill="#6cdcbd"/>
<rect x="1102.85" y="766.60" width="37.30" height="33.60" fill="#d03a5e"/>
<rect x="1102.85" y="802.20" width="37.30" height="32.20" fill="#d03c9c"/>
<rect x="1102.85" y="836.40" width="37.30" height="17.90" fill="#d03c9c"/>
<rect x="1102.85" y="856.30" width="37.30" height="9.00" fill="#4fb5dd"/>
<rect x="1102.85" y="867.10" width="37.30" height="7.85" fill="#d043a4"/>
<rect x="1102.85" y="876.55" width="37.30" height="7.56" fill="#d89c48"/>
<rect x="1102.85" y="885.70" width="37.30" height="4.86" fill="#6c34cc"/>
<rect x="1102.85" y="892.16" width="37.30" height="4.86" fill="#74d46a"/>
<rect x="1102.85" y="898.62" width="37.30" height="4.86" fill="#d0624a"/>
<rect x="1102.85" y="905.07" width="37.30" height="3.80" fill="#78d878"/>
<rect x="1102.85" y="910.62" width="37.30" height="2.82" fill="#90d880"/>
<rect x="1102.85" y="915.34" width="37.30" height="1.47" fill="#d89c48"/>
<rect x="1102.85" y="918.72" width="37.30" height="0.99" fill="#d4d460"/>
<rect x="1102.85" y="921.61" width="37.30" height="1.47" fill="#9c4ac8"/>
<rect x="1102.85" y="924.98" width="37.30" height="0.99" fill="#80d0c4"/>
<rect x="1102.85" y="927.87" width="37.30" height="1.28" fill="#cc4a68"/>
<rect x="1102.85" y="931.05" width="37.30" height="1.28" fill="#9c4ac8"/>
<rect x="1102.85" y="934.23" width="37.30" height="1.38" fill="#80d0c4"/>
<rect x="1102.85" y="937.51" width="37.30" height="2.34" fill="#74d46a"/>
<rect x="1142.42" y="325.60" width="41.30" height="615.20" fill="#07110b"/>
<rect x="1142.42" y="325.60" width="41.30" height="157.90" fill="#0a1509"/>
<rect x="1142.42" y="483.50" width="41.30" height="54.70" fill="#121509"/>
<rect x="1142.42" y="538.20" width="41.30" height="41.80" fill="#11080a"/>
<rect x="1142.42" y="580.00" width="41.30" height="41.30" fill="#0a1511"/>
<rect x="1142.42" y="621.30" width="41.30" height="41.20" fill="#0a150e"/>
<rect x="1142.42" y="662.50" width="41.30" height="41.90" fill="#070612"/>
<rect x="1142.42" y="704.40" width="41.30" height="39.50" fill="#0a1511"/>
<rect x="1142.42" y="743.90" width="41.30" height="38.00" fill="#11080e"/>
<rect x="1142.42" y="781.90" width="41.30" height="37.90" fill="#070c12"/>
<rect x="1142.42" y="819.80" width="41.30" height="11.00" fill="#081213"/>
<rect x="1144.42" y="327.20" width="37.30" height="155.30" fill="#6ddc4f"/>
<rect x="1144.42" y="484.50" width="37.30" height="52.70" fill="#d9dc4f"/>
<rect x="1144.42" y="539.20" width="37.30" height="39.80" fill="#d03a5e"/>
<rect x="1144.42" y="581.00" width="37.30" height="39.30" fill="#6cdcbd"/>
<rect x="1144.42" y="622.30" width="37.30" height="39.20" fill="#6ddc98"/>
<rect x="1144.42" y="663.50" width="37.30" height="39.90" fill="#3a20d6"/>
<rect x="1144.42" y="705.40" width="37.30" height="37.50" fill="#6cdcbd"/>
<rect x="1144.42" y="744.90" width="37.30" height="36.00" fill="#d03c9c"/>
<rect x="1144.42" y="782.90" width="37.30" height="35.90" fill="#3b66d6"/>
<rect x="1144.42" y="820.80" width="37.30" height="9.00" fill="#4fb5dd"/>
<rect x="1144.42" y="831.60" width="37.30" height="12.35" fill="#d043a4"/>
<rect x="1144.42" y="845.55" width="37.30" height="11.92" fill="#d89c48"/>
<rect x="1144.42" y="859.06" width="37.30" height="7.93" fill="#6c34cc"/>
<rect x="1144.42" y="868.60" width="37.30" height="7.93" fill="#74d46a"/>
<rect x="1144.42" y="878.13" width="37.30" height="7.93" fill="#d0624a"/>
<rect x="1144.42" y="887.67" width="37.30" height="6.37" fill="#78d878"/>
<rect x="1144.42" y="895.64" width="37.30" height="5.37" fill="#74d46a"/>
<rect x="1144.42" y="902.76" width="37.30" height="3.08" fill="#d0624a"/>
<rect x="1144.42" y="907.74" width="37.30" height="2.37" fill="#9c4ac8"/>
<rect x="1144.42" y="912.01" width="37.30" height="3.08" fill="#d89c48"/>
<rect x="1144.42" y="916.99" width="37.30" height="2.37" fill="#c64aa8"/>
<rect x="1144.42" y="921.26" width="37.30" height="2.80" fill="#80d0c4"/>
<rect x="1144.42" y="925.95" width="37.30" height="2.80" fill="#9c4ac8"/>
<rect x="1144.42" y="930.65" width="37.30" height="2.94" fill="#90d880"/>
<rect x="1144.42" y="935.34" width="37.30" height="4.66" fill="#d4d460"/>
<rect x="1183.99" y="353.20" width="41.30" height="587.60" fill="#07110b"/>
<rect x="1183.99" y="353.20" width="41.30" height="159.00" fill="#0a1509"/>
<rect x="1183.99" y="512.20" width="41.30" height="55.40" fill="#121509"/>
<rect x="1183.99" y="567.60" width="41.30" height="42.00" fill="#0a1511"/>
<rect x="1183.99" y="609.60" width="41.30" height="42.60" fill="#070612"/>
<rect x="1183.99" y="652.20" width="41.30" height="41.20" fill="#0a1511"/>
<rect x="1183.99" y="693.40" width="41.30" height="41.90" fill="#0a150e"/>
<rect x="1183.99" y="735.30" width="41.30" height="41.20" fill="#11080a"/>
<rect x="1183.99" y="776.50" width="41.30" height="38.00" fill="#11080e"/>
<rect x="1183.99" y="814.50" width="41.30" height="36.00" fill="#070c12"/>
<rect x="1183.99" y="850.50" width="41.30" height="12.70" fill="#081213"/>
<rect x="1185.99" y="354.80" width="37.30" height="156.40" fill="#6ddc4f"/>
<rect x="1185.99" y="513.20" width="37.30" height="53.40" fill="#d9dc4f"/>
<rect x="1185.99" y="568.60" width="37.30" height="40.00" fill="#6cdcbd"/>
<rect x="1185.99" y="610.60" width="37.30" height="40.60" fill="#3a20d6"/>
<rect x="1185.99" y="653.20" width="37.30" height="39.20" fill="#6cdcbd"/>
<rect x="1185.99" y="694.40" width="37.30" height="39.90" fill="#6ddc98"/>
<rect x="1185.99" y="736.30" width="37.30" height="39.20" fill="#d03a5e"/>
<rect x="1185.99" y="777.50" width="37.30" height="36.00" fill="#d03c9c"/>
<rect x="1185.99" y="815.50" width="37.30" height="34.00" fill="#3b66d6"/>
<rect x="1185.99" y="851.50" width="37.30" height="10.70" fill="#4fb5dd"/>
<rect x="1185.99" y="864.00" width="37.30" height="8.24" fill="#d043a4"/>
<rect x="1185.99" y="873.84" width="37.30" height="7.94" fill="#d89c48"/>
<rect x="1185.99" y="883.37" width="37.30" height="5.13" fill="#74d46a"/>
<rect x="1185.99" y="890.10" width="37.30" height="5.13" fill="#6c34cc"/>
<rect x="1185.99" y="896.83" width="37.30" height="5.13" fill="#d0624a"/>
<rect x="1185.99" y="903.55" width="37.30" height="4.02" fill="#78d878"/>
<rect x="1185.99" y="909.32" width="37.30" height="3.02" fill="#9c4ac8"/>
<rect x="1185.99" y="914.24" width="37.30" height="1.61" fill="#d89c48"/>
<rect x="1185.99" y="917.76" width="37.30" height="1.11" fill="#d4d460"/>
<rect x="1185.99" y="920.77" width="37.30" height="1.61" fill="#64a8d4"/>
<rect x="1185.99" y="924.28" width="37.30" height="1.11" fill="#80d0c4"/>
<rect x="1185.99" y="927.29" width="37.30" height="1.41" fill="#80d0c4"/>
<rect x="1185.99" y="930.61" width="37.30" height="1.41" fill="#4444c4"/>
<rect x="1185.99" y="933.92" width="37.30" height="1.51" fill="#c64aa8"/>
<rect x="1185.99" y="937.33" width="37.30" height="2.52" fill="#d0624a"/>
<rect x="1225.56" y="362.10" width="41.30" height="578.70" fill="#07110b"/>
<rect x="1225.56" y="362.10" width="41.30" height="157.80" fill="#0a1509"/>
<rect x="1225.56" y="519.90" width="41.30" height="53.50" fill="#121509"/>
<rect x="1225.56" y="573.40" width="41.30" height="41.60" fill="#0a1511"/>
<rect x="1225.56" y="615.00" width="41.30" height="41.90" fill="#070612"/>
<rect x="1225.56" y="656.90" width="41.30" height="41.10" fill="#11080a"/>
<rect x="1225.56" y="698.00" width="41.30" height="40.80" fill="#0a150e"/>
<rect x="1225.56" y="738.80" width="41.30" height="39.60" fill="#0a1511"/>
<rect x="1225.56" y="778.40" width="41.30" height="37.70" fill="#070c12"/>
<rect x="1225.56" y="816.10" width="41.30" height="35.20" fill="#11080e"/>
<rect x="1225.56" y="851.30" width="41.30" height="11.10" fill="#081213"/>
<rect x="1227.56" y="363.70" width="37.30" height="155.20" fill="#6ddc4f"/>
<rect x="1227.56" y="520.90" width="37.30" height="51.50" fill="#d9dc4f"/>
<rect x="1227.56" y="574.40" width="37.30" height="39.60" fill="#6cdcbd"/>
<rect x="1227.56" y="616.00" width="37.30" height="39.90" fill="#3a20d6"/>
<rect x="1227.56" y="657.90" width="37.30" height="39.10" fill="#d03a5e"/>
<rect x="1227.56" y="699.00" width="37.30" height="38.80" fill="#6ddc98"/>
<rect x="1227.56" y="739.80" width="37.30" height="37.60" fill="#6cdcbd"/>
<rect x="1227.56" y="779.40" width="37.30" height="35.70" fill="#3b66d6"/>
<rect x="1227.56" y="817.10" width="37.30" height="33.20" fill="#d03c9c"/>
<rect x="1227.56" y="852.30" width="37.30" height="9.10" fill="#4fb5dd"/>
<rect x="1227.56" y="863.20" width="37.30" height="8.34" fill="#d043a4"/>
<rect x="1227.56" y="873.14" width="37.30" height="8.04" fill="#d89c48"/>
<rect x="1227.56" y="882.77" width="37.30" height="5.20" fill="#6c34cc"/>
<rect x="1227.56" y="889.57" width="37.30" height="5.20" fill="#74d46a"/>
<rect x="1227.56" y="896.37" width="37.30" height="5.20" fill="#d0624a"/>
<rect x="1227.56" y="903.16" width="37.30" height="4.08" fill="#78d878"/>
<rect x="1227.56" y="908.99" width="37.30" height="3.07" fill="#d0624a"/>
<rect x="1227.56" y="913.96" width="37.30" height="1.65" fill="#d89c48"/>
<rect x="1227.56" y="917.51" width="37.30" height="1.14" fill="#9c4ac8"/>
<rect x="1227.56" y="920.55" width="37.30" height="1.65" fill="#4444c4"/>
<rect x="1227.56" y="924.10" width="37.30" height="1.14" fill="#90d880"/>
<rect x="1227.56" y="927.15" width="37.30" height="1.45" fill="#9c4ac8"/>
<rect x="1227.56" y="930.49" width="37.30" height="1.45" fill="#c64aa8"/>
<rect x="1227.56" y="933.84" width="37.30" height="1.55" fill="#64a8d4"/>
<rect x="1227.56" y="937.29" width="37.30" height="2.56" fill="#d4d460"/>
<rect x="1267.13" y="547.50" width="41.30" height="393.30" fill="#07110b"/>
<rect x="1267.13" y="547.50" width="41.30" height="107.50" fill="#0a1509"/>
<rect x="1267.13" y="655.00" width="41.30" height="36.10" fill="#121509"/>
<rect x="1267.13" y="691.10" width="41.30" height="27.20" fill="#0a150e"/>
<rect x="1267.13" y="718.30" width="41.30" height="26.30" fill="#0a1511"/>
<rect x="1267.13" y="744.60" width="41.30" height="27.30" fill="#070612"/>
<rect x="1267.13" y="771.90" width="41.30" height="25.60" fill="#11080a"/>
<rect x="1267.13" y="797.50" width="41.30" height="25.40" fill="#0a1511"/>
<rect x="1267.13" y="822.90" width="41.30" height="23.70" fill="#11080e"/>
<rect x="1267.13" y="846.60" width="41.30" height="22.90" fill="#070c12"/>
<rect x="1267.13" y="869.50" width="41.30" height="7.90" fill="#081213"/>
<rect x="1269.13" y="549.10" width="37.30" height="104.90" fill="#6ddc4f"/>
<rect x="1269.13" y="656.00" width="37.30" height="34.10" fill="#d9dc4f"/>
<rect x="1269.13" y="692.10" width="37.30" height="25.20" fill="#6ddc98"/>
<rect x="1269.13" y="719.30" width="37.30" height="24.30" fill="#6cdcbd"/>
<rect x="1269.13" y="745.60" width="37.30" height="25.30" fill="#3a20d6"/>
<rect x="1269.13" y="772.90" width="37.30" height="23.60" fill="#d03a5e"/>
<rect x="1269.13" y="798.50" width="37.30" height="23.40" fill="#6cdcbd"/>
<rect x="1269.13" y="823.90" width="37.30" height="21.70" fill="#d03c9c"/>
<rect x="1269.13" y="847.60" width="37.30" height="20.90" fill="#3b66d6"/>
<rect x="1269.13" y="870.50" width="37.30" height="5.90" fill="#4fb5dd"/>
<rect x="1269.13" y="878.20" width="37.30" height="6.44" fill="#d043a4"/>
<rect x="1269.13" y="886.24" width="37.30" height="6.19" fill="#d89c48"/>
<rect x="1269.13" y="894.03" width="37.30" height="3.90" fill="#74d46a"/>
<rect x="1269.13" y="899.52" width="37.30" height="3.90" fill="#6c34cc"/>
<rect x="1269.13" y="905.02" width="37.30" height="3.90" fill="#d0624a"/>
<rect x="1269.13" y="910.67" width="37.30" height="2.69" fill="#78d878"/>
<rect x="1269.13" y="915.26" width="37.30" height="2.12" fill="#90d880"/>
<rect x="1269.13" y="919.28" width="37.30" height="0.97" fill="#9c4ac8"/>
<rect x="1269.13" y="922.15" width="37.30" height="0.56" fill="#80d0c4"/>
<rect x="1269.13" y="924.61" width="37.30" height="0.97" fill="#c64aa8"/>
<rect x="1269.13" y="927.48" width="37.30" height="0.56" fill="#80d0c4"/>
<rect x="1269.13" y="929.94" width="37.30" height="0.81" fill="#9c4ac8"/>
<rect x="1269.13" y="932.65" width="37.30" height="0.81" fill="#cc4a68"/>
<rect x="1269.13" y="935.35" width="37.30" height="0.89" fill="#d4d460"/>
<rect x="1269.13" y="938.14" width="37.30" height="1.71" fill="#d89c48"/>
<line x1="61.4" y1="941" x2="61.4" y2="947" stroke="#1c2330" stroke-width="1"/>
<line x1="103.0" y1="941" x2="103.0" y2="947" stroke="#1c2330" stroke-width="1"/>
<line x1="144.5" y1="941" x2="144.5" y2="947" stroke="#1c2330" stroke-width="1"/>
<line x1="186.1" y1="941" x2="186.1" y2="947" stroke="#1c2330" stroke-width="1"/>
<line x1="227.7" y1="941" x2="227.7" y2="947" stroke="#1c2330" stroke-width="1"/>
<line x1="269.2" y1="941" x2="269.2" y2="947" stroke="#1c2330" stroke-width="1"/>
<line x1="310.8" y1="941" x2="310.8" y2="947" stroke="#1c2330" stroke-width="1"/>
<line x1="352.4" y1="941" x2="352.4" y2="947" stroke="#1c2330" stroke-width="1"/>
<line x1="394.0" y1="941" x2="394.0" y2="947" stroke="#1c2330" stroke-width="1"/>
<line x1="435.5" y1="941" x2="435.5" y2="947" stroke="#1c2330" stroke-width="1"/>
<line x1="477.1" y1="941" x2="477.1" y2="947" stroke="#1c2330" stroke-width="1"/>
<line x1="518.7" y1="941" x2="518.7" y2="947" stroke="#1c2330" stroke-width="1"/>
<line x1="560.2" y1="941" x2="560.2" y2="947" stroke="#1c2330" stroke-width="1"/>
<line x1="601.8" y1="941" x2="601.8" y2="947" stroke="#1c2330" stroke-width="1"/>
<line x1="643.4" y1="941" x2="643.4" y2="947" stroke="#1c2330" stroke-width="1"/>
<line x1="684.9" y1="941" x2="684.9" y2="947" stroke="#1c2330" stroke-width="1"/>
<line x1="726.5" y1="941" x2="726.5" y2="947" stroke="#1c2330" stroke-width="1"/>
<line x1="768.1" y1="941" x2="768.1" y2="947" stroke="#1c2330" stroke-width="1"/>
<line x1="809.7" y1="941" x2="809.7" y2="947" stroke="#1c2330" stroke-width="1"/>
<line x1="851.2" y1="941" x2="851.2" y2="947" stroke="#1c2330" stroke-width="1"/>
<line x1="892.8" y1="941" x2="892.8" y2="947" stroke="#1c2330" stroke-width="1"/>
<line x1="934.4" y1="941" x2="934.4" y2="947" stroke="#1c2330" stroke-width="1"/>
<line x1="975.9" y1="941" x2="975.9" y2="947" stroke="#1c2330" stroke-width="1"/>
<line x1="1017.5" y1="941" x2="1017.5" y2="947" stroke="#1c2330" stroke-width="1"/>
<line x1="1059.1" y1="941" x2="1059.1" y2="947" stroke="#1c2330" stroke-width="1"/>
<line x1="1100.6" y1="941" x2="1100.6" y2="947" stroke="#1c2330" stroke-width="1"/>
<line x1="1142.2" y1="941" x2="1142.2" y2="947" stroke="#1c2330" stroke-width="1"/>
<line x1="1183.8" y1="941" x2="1183.8" y2="947" stroke="#1c2330" stroke-width="1"/>
<line x1="1225.4" y1="941" x2="1225.4" y2="947" stroke="#1c2330" stroke-width="1"/>
<line x1="1266.9" y1="941" x2="1266.9" y2="947" stroke="#1c2330" stroke-width="1"/>
<line x1="1308.5" y1="941" x2="1308.5" y2="947" stroke="#1c2330" stroke-width="1"/>
</svg>
<div class="a" style="left:1321px;top:293px;color:#8c93a0;font-size:12.5px;line-height:1">1170</div>
<div class="a" style="left:1321px;top:452px;color:#8c93a0;font-size:12.5px;line-height:1">880</div>
<div class="a" style="left:1321px;top:611px;color:#8c93a0;font-size:12.5px;line-height:1">590</div>
<div class="a" style="left:1321px;top:775px;color:#8c93a0;font-size:12.5px;line-height:1">290</div>
<div class="a" style="left:1321px;top:933px;color:#8c93a0;font-size:12.5px;line-height:1">0</div>
<div class="a" style="left:45px;top:950.5px;color:#e9ecf0;-webkit-text-stroke:0.4px #e9ecf0;font-size:12.8px;line-height:1">13/01</div>
<div class="a" style="left:336px;top:950px;color:#8c93a0;font-size:12.5px;line-height:1">20/01</div>
<div class="a" style="left:627px;top:950px;color:#8c93a0;font-size:12.5px;line-height:1">27/01</div>
<div class="a" style="left:918px;top:950px;color:#8c93a0;font-size:12.5px;line-height:1">03/02</div>
<div class="a" style="left:1209px;top:950px;color:#8c93a0;font-size:12.5px;line-height:1">10/02</div>

<!-- right panel -->
<div class="a" style="left:1406px;top:110px;width:471px;height:918px;border:1px solid #2a3241;background:#111827"></div>
<div class="lbl" style="left:1425px;top:143px">Measure</div>
<div class="dd" style="left:1425px;top:177px;width:424px;height:59px"></div>
<div class="ddt" style="left:1441px;top:197px">Execution count</div>
<svg class="chev" style="left:1820px;top:201px" viewBox="0 0 14 10"><path d="M1 1.5L7 8.5L13 1.5" fill="none" stroke="#6e7687" stroke-width="1.4"/></svg>
<div class="sep" style="left:1425px;top:266px;width:424px"></div>
<div class="lbl" style="left:1425px;top:311px">Filter</div>
<svg class="a" style="left:1830px;top:311px" width="20" height="20" viewBox="0 0 20 20"><circle cx="10" cy="10" r="8.6" fill="none" stroke="#aeb4be" stroke-width="1.3"/><path d="M10 5.5V14.5M5.5 10H14.5" stroke="#aeb4be" stroke-width="1.3"/></svg>
<div class="sep" style="left:1425px;top:421px;width:424px"></div>
<div class="lbl" style="left:1425px;top:459px">Aggregate</div>
<div class="dd" style="left:1425px;top:493px;width:424px;height:59px"></div>
<div class="ddt" style="left:1441px;top:512px">Sum</div>
<svg class="chev" style="left:1820px;top:516px" viewBox="0 0 14 10"><path d="M1 1.5L7 8.5L13 1.5" fill="none" stroke="#6e7687" stroke-width="1.4"/></svg>
<div class="sep" style="left:1425px;top:581px;width:424px"></div>
<div class="lbl" style="left:1425px;top:619px">Segment</div>
<div class="dd" style="left:1425px;top:653px;width:424px;height:58px"></div>
<div class="ddt" style="left:1441px;top:672px">Workflow</div>
<svg class="chev" style="left:1820px;top:676px" viewBox="0 0 14 10"><path d="M1 1.5L7 8.5L13 1.5" fill="none" stroke="#6e7687" stroke-width="1.4"/></svg>

<!-- table -->
<div class="a" style="left:24px;top:1061px;width:1846px;height:460px;background:#111827"></div>
<div class="a" style="left:24px;top:1061px;width:479px;height:69px;background:#111726"></div>
<div class="a" style="left:503px;top:1061px;width:1240px;height:69px;background:#1f2838"></div>
<div class="a" style="left:1743px;top:1061px;width:127px;height:69px;background:#111726"></div>
<div class="a" style="left:24px;top:1130px;width:1846px;height:3px;background:#222a38"></div>
<div class="a" style="left:24px;top:1133px;width:1846px;height:72px;background:#0b101b"></div>
<div class="a" style="left:24px;top:1205px;width:1846px;height:1px;background:#222938"></div>
<div class="a" style="left:24px;top:1278px;width:1846px;height:1px;background:#222938"></div>
<div class="a" style="left:24px;top:1351px;width:1846px;height:1px;background:#222938"></div>
<div class="a" style="left:24px;top:1424px;width:1846px;height:1px;background:#222938"></div>
<div class="a" style="left:24px;top:1497px;width:1846px;height:1px;background:#222938"></div>
<div class="a" style="left:44px;top:1083px;color:#9aa1ad;font-size:18.5px;line-height:1;white-space:nowrap">Segment by workflow</div>
<div class="th" style="left:521.5px;width:120px;top:1083px">Jan 13</div>
<div class="th" style="left:681.6px;width:120px;top:1083px">Jan 14</div>
<div class="th" style="left:841.7px;width:120px;top:1083px">Jan 15</div>
<div class="th" style="left:1001.8px;width:120px;top:1083px">Jan 16</div>
<div class="th" style="left:1161.9px;width:120px;top:1083px">Jan 17</div>
<div class="th" style="left:1322.0px;width:120px;top:1083px">Jan 18</div>
<div class="th" style="left:1482.1px;width:120px;top:1083px">Jan 19</div>
<div class="th" style="left:1642.2px;width:120px;top:1083px">Jan 20</div>
<div class="td" style="left:44px;top:1159px;text-align:left">Total</div>
<div class="td" style="left:521.5px;width:120px;top:1159px">1357</div>
<div class="td" style="left:681.6px;width:120px;top:1159px">1348</div>
<div class="td" style="left:841.7px;width:120px;top:1159px">1381</div>
<div class="td" style="left:1001.8px;width:120px;top:1159px">1339</div>
<div class="td" style="left:1161.9px;width:120px;top:1159px">1362</div>
<div class="td" style="left:1322.0px;width:120px;top:1159px">1343</div>
<div class="td" style="left:1482.1px;width:120px;top:1159px">1290</div>
<div class="td" style="left:1642.2px;width:120px;top:1159px">1345</div>
<div class="sq" style="left:44px;top:1233px;background:#6ddc4f"></div>
<div class="td" style="left:69.5px;top:1231.5px;text-align:left;font-size:18.95px">postman-workflow-smoke-cron-trigger-test</div>
<div class="td" style="left:521.5px;width:120px;top:1232px">291</div>
<div class="td" style="left:681.6px;width:120px;top:1232px">290</div>
<div class="td" style="left:841.7px;width:120px;top:1232px">294</div>
<div class="td" style="left:1001.8px;width:120px;top:1232px">289</div>
<div class="td" style="left:1161.9px;width:120px;top:1232px">291</div>
<div class="td" style="left:1322.0px;width:120px;top:1232px">288</div>
<div class="td" style="left:1482.1px;width:120px;top:1232px">290</div>
<div class="td" style="left:1642.2px;width:120px;top:1232px">288</div>
<div class="sq" style="left:44px;top:1306px;background:#d9dc4f"></div>
<div class="td" style="left:69.5px;top:1304.5px;text-align:left;font-size:18.95px">soapui-workflow-smoke</div>
<div class="td" style="left:521.5px;width:120px;top:1305px">101</div>
<div class="td" style="left:681.6px;width:120px;top:1305px">101</div>
<div class="td" style="left:841.7px;width:120px;top:1305px">102</div>
<div class="td" style="left:1001.8px;width:120px;top:1305px">102</div>
<div class="td" style="left:1161.9px;width:120px;top:1305px">102</div>
<div class="td" style="left:1322.0px;width:120px;top:1305px">101</div>
<div class="td" style="left:1482.1px;width:120px;top:1305px">100</div>
<div class="td" style="left:1642.2px;width:120px;top:1305px">101</div>
<div class="sq" style="left:44px;top:1379px;background:#6cdcbd"></div>
<div class="td" style="left:69.5px;top:1377.5px;text-align:left;font-size:18.95px">artillery-workflow-smoke</div>
<div class="td" style="left:521.5px;width:120px;top:1378px">78</div>
<div class="td" style="left:681.6px;width:120px;top:1378px">77</div>
<div class="td" style="left:841.7px;width:120px;top:1378px">79</div>
<div class="td" style="left:1001.8px;width:120px;top:1378px">77</div>
<div class="td" style="left:1161.9px;width:120px;top:1378px">78</div>
<div class="td" style="left:1322.0px;width:120px;top:1378px">76</div>
<div class="td" style="left:1482.1px;width:120px;top:1378px">76</div>
<div class="td" style="left:1642.2px;width:120px;top:1378px">77</div>
<div class="sq" style="left:44px;top:1452px;background:#6cdcbd"></div>
<div class="td" style="left:69.5px;top:1450.5px;text-align:left;font-size:18.95px">jmeter-workflow-smoke-shell-artifacts</div>
<div class="td" style="left:521.5px;width:120px;top:1451px">77</div>
<div class="td" style="left:681.6px;width:120px;top:1451px">78</div>
<div class="td" style="left:841.7px;width:120px;top:1451px">77</div>
<div class="td" style="left:1001.8px;width:120px;top:1451px">74</div>
<div class="td" style="left:1161.9px;width:120px;top:1451px">78</div>
<div class="td" style="left:1322.0px;width:120px;top:1451px">76</div>
<div class="td" style="left:1482.1px;width:120px;top:1451px">76</div>
<div class="td" style="left:1642.2px;width:120px;top:1451px">77</div>
<div class="a" style="left:1743px;top:1133px;width:127px;height:72px;background:#0b101b"></div>
<div class="a" style="left:1743px;top:1206px;width:127px;height:72px;background:#111827"></div>
<div class="a" style="left:1743px;top:1279px;width:127px;height:72px;background:#111827"></div>
<div class="a" style="left:1743px;top:1352px;width:127px;height:72px;background:#111827"></div>
<div class="a" style="left:1743px;top:1425px;width:127px;height:72px;background:#111827"></div>
<div class="a" style="left:1743px;top:1061px;width:127px;height:69px;background:#111726"></div>
<div class="th" style="left:1747px;width:127px;top:1083px;text-align:center">Average</div>
<div class="td" style="left:1743px;width:134px;top:1159px;text-align:center">1324</div>
<div class="td" style="left:1743px;width:134px;top:1232px;text-align:center">285</div>
<div class="td" style="left:1743px;width:134px;top:1305px;text-align:center">99</div>
<div class="td" style="left:1743px;width:134px;top:1378px;text-align:center">75</div>
<div class="td" style="left:1743px;width:134px;top:1451px;text-align:center">75</div>
<!-- annotation boxes -->
<div class="box" style="left:8px;top:91px;width:364px;height:93px"></div>
<div class="box" style="left:1064px;top:93px;width:312px;height:91px"></div>
<div class="box" style="left:8px;top:191px;width:1366px;height:842px"></div>
<div class="box" style="left:1398px;top:102px;width:487px;height:939px"></div>
<div class="box" style="left:16px;top:1053px;width:1862px;height:480px"></div>
<div class="ann" style="left:391px;top:91.5px">Period Selector</div>
<div class="ann" style="left:823px;top:91.5px">Analysis Selector</div>
<div class="ann" style="left:256px;top:213px">The Graph View</div>
<div class="ann" style="left:1637px;top:123px">Analysis Controls</div>
<div class="ann" style="left:261px;top:1078px">The Table View</div>
<div class="ann" style="left:431px;top:1355.5px">Click to</div>
<div class="ann" style="left:379px;top:1388px;word-spacing:8px">see executions</div>
<svg class="a" style="left:0;top:1340px" width="700" height="100"><ellipse cx="192.8" cy="48" rx="168" ry="30.5" fill="none" stroke="#e8452a" stroke-width="6"/><ellipse cx="632.6" cy="47.6" rx="45.2" ry="28.2" fill="none" stroke="#e8452a" stroke-width="5.6"/></svg>
</body></html>
